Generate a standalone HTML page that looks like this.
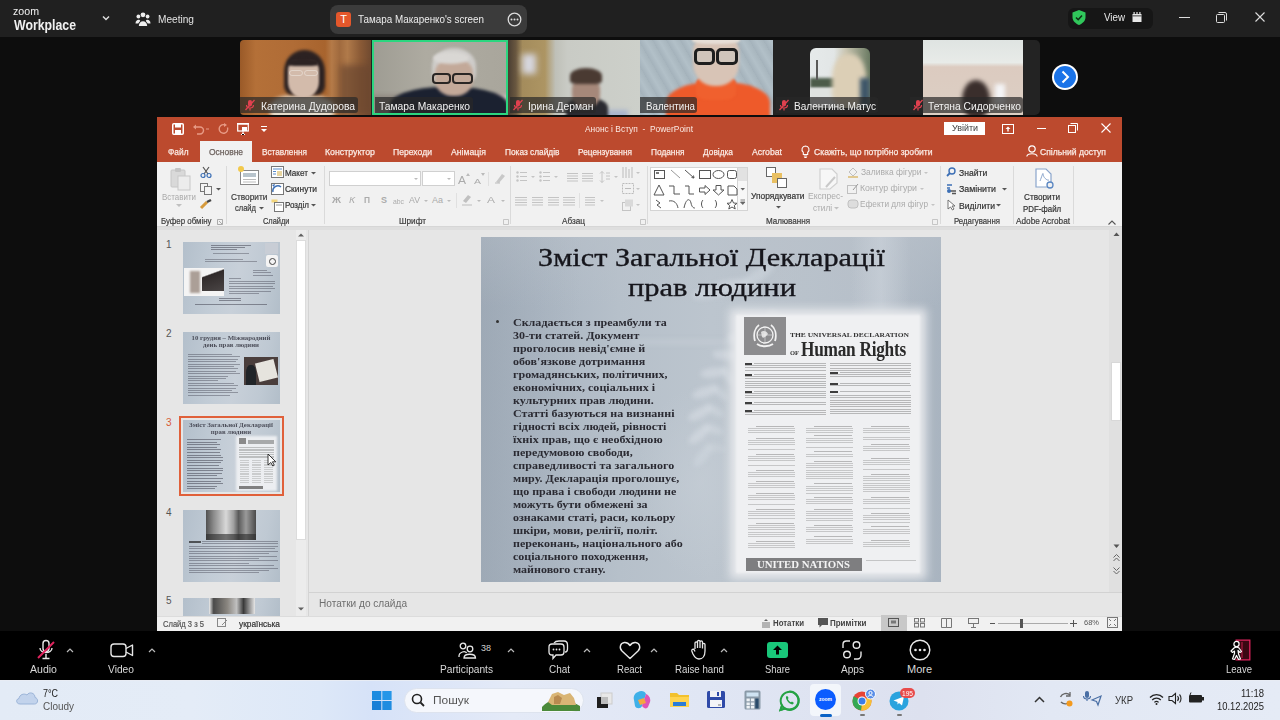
<!DOCTYPE html><html><head><meta charset="utf-8"><style>
*{margin:0;padding:0;box-sizing:border-box}
html,body{width:1280px;height:720px;overflow:hidden;background:#0d0d0d;font-family:"Liberation Sans",sans-serif}
.a{position:absolute}
.t{position:absolute;white-space:pre}
.bl{filter:blur(2px)}
svg{position:absolute;overflow:visible}
</style></head><body>
<div class="a" style="left:0;top:0;width:1280px;height:37px;background:#202020"></div>
<div class="t" style="left:13.00px;top:5.69px;font-size:11px;line-height:11px;color:#f0f0f0;font-weight:normal;font-family:'Liberation Sans',sans-serif;transform:scaleX(0.9663);transform-origin:0 0;">zoom</div>
<div class="t" style="left:14.00px;top:17.73px;font-size:14.5px;line-height:14.5px;color:#f0f0f0;font-weight:bold;font-family:'Liberation Sans',sans-serif;transform:scaleX(0.8484);transform-origin:0 0;">Workplace</div>
<svg style="left:101px;top:14px" width="10" height="8"><path d="M2 2.5 L5 5.5 L8 2.5" stroke="#ddd" stroke-width="1.5" fill="none"/></svg>
<svg style="left:135px;top:11px" width="16" height="16" viewBox="0 0 16 16" fill="#eee"><circle cx="8" cy="3.8" r="2.4"/><circle cx="3.4" cy="5.5" r="1.9"/><circle cx="12.6" cy="5.5" r="1.9"/><path d="M3.8 15 C3.8 8.5 12.2 8.5 12.2 15Z"/><path d="M0.5 12.5 C0.5 8 5 8 5.2 10 L3.2 12.5Z"/><path d="M15.5 12.5 C15.5 8 11 8 10.8 10 L12.8 12.5Z"/></svg>
<div class="t" style="left:158.00px;top:13.77px;font-size:11.5px;line-height:11.5px;color:#e2e2e2;font-weight:normal;font-family:'Liberation Sans',sans-serif;transform:scaleX(0.8797);transform-origin:0 0;">Meeting</div>
<div class="a" style="left:330px;top:5px;width:197px;height:29px;background:#3b3b3b;border-radius:8px"></div>
<div class="a" style="left:336px;top:12px;width:15px;height:15px;background:#e4572b;border-radius:3px"></div>
<div class="t" style="left:340.13px;top:13.69px;font-size:11px;line-height:11px;color:#fff;font-weight:normal;font-family:'Liberation Sans',sans-serif;">T</div>
<div class="t" style="left:358.00px;top:13.77px;font-size:11.5px;line-height:11.5px;color:#ececec;font-weight:normal;font-family:'Liberation Sans',sans-serif;transform:scaleX(0.8551);transform-origin:0 0;">Тамара Макаренко's screen</div>
<svg style="left:507px;top:12px" width="15" height="15"><circle cx="7.5" cy="7.5" r="6.3" stroke="#ddd" stroke-width="1.3" fill="none"/><circle cx="4.5" cy="7.5" r="1" fill="#ddd"/><circle cx="7.5" cy="7.5" r="1" fill="#ddd"/><circle cx="10.5" cy="7.5" r="1" fill="#ddd"/></svg>
<div class="a" style="left:1068px;top:8px;width:85px;height:21px;background:#161616;border-radius:6px"></div>
<svg style="left:1071px;top:9px" width="16" height="17" viewBox="0 0 16 17"><path d="M8 1 L14.5 3.5 L14.5 8 C14.5 12 11.5 14.5 8 16 C4.5 14.5 1.5 12 1.5 8 L1.5 3.5Z" fill="#30c75b"/><path d="M5 8.5 L7.2 10.7 L11 6.5" stroke="#0f2f16" stroke-width="1.6" fill="none"/></svg>
<div class="t" style="left:1104.00px;top:12.27px;font-size:11.5px;line-height:11.5px;color:#e8e8e8;font-weight:normal;font-family:'Liberation Sans',sans-serif;transform:scaleX(0.8496);transform-origin:0 0;">View</div>
<svg style="left:1132px;top:12px" width="10" height="10"><rect x="0.5" y="2" width="9" height="8" fill="#e8e8e8"/><rect x="1.5" y="0" width="1.2" height="2" fill="#e8e8e8"/><rect x="4.4" y="0" width="1.2" height="2" fill="#e8e8e8"/><rect x="7.3" y="0" width="1.2" height="2" fill="#e8e8e8"/><rect x="0.5" y="3.5" width="9" height="0.8" fill="#161616"/></svg>
<div class="a" style="left:1179px;top:17px;width:11px;height:1px;background:#ddd"></div>
<svg style="left:1215px;top:11px" width="13" height="13"><rect x="1.5" y="3.5" width="8" height="8" rx="1" stroke="#ddd" fill="none"/><path d="M3.5 1.5 H10 a1.5 1.5 0 0 1 1.5 1.5 V9.5" stroke="#ddd" fill="none"/></svg>
<svg style="left:1254px;top:11px" width="12" height="12"><path d="M1.5 1.5 L10.5 10.5 M10.5 1.5 L1.5 10.5" stroke="#ddd" stroke-width="1.1"/></svg>
<div class="a" style="left:240px;top:40px;width:800px;height:75px;background:#232323;border-radius:5px"></div>
<div class="a" style="left:240px;top:40px;width:131px;height:75px;overflow:hidden;border-radius:4px 0 0 4px;background:linear-gradient(90deg,#9a5a28 0%,#b47038 12%,#b06c36 40%,#a8642e 65%,#b47a48 70%,#a06a3e 76%,#b07a4a 82%,#8a5a36 92%,#704a30 100%)">
 <div class="a" style="left:100px;top:25px;width:31px;height:50px;background:#6a4630;filter:blur(3px);opacity:0.7"></div>
 <div class="a" style="left:30px;top:55px;width:64px;height:30px;border-radius:40%;background:#e6dccb;filter:blur(2px)"></div>
 <div class="a" style="left:44px;top:10px;width:41px;height:45px;border-radius:48% 48% 20% 20%;background:#2c2222;filter:blur(1.5px)"></div>
 <div class="a" style="left:48px;top:21px;width:31px;height:37px;border-radius:25% 25% 45% 45%;background:#d3bbab;filter:blur(1.2px)"></div>
 <div class="a" style="left:48px;top:18px;width:30px;height:8px;border-radius:50% 50% 20% 20%;background:#2c2222;filter:blur(1px)"></div>
 <div class="a" style="left:49px;top:30px;width:14px;height:6px;border:1px solid #ece4de;border-radius:3px;opacity:0.6"></div>
 <div class="a" style="left:64px;top:30px;width:14px;height:6px;border:1px solid #ece4de;border-radius:3px;opacity:0.6"></div>
</div>
<div class="a" style="left:240px;top:97px;width:118px;height:16px;background:rgba(40,40,40,0.7);border-radius:0 3px 3px 0"></div><svg style="left:244px;top:99px" width="12" height="12"><rect x="4" y="1" width="4" height="6.5" rx="2" fill="#e0414f"/><path d="M2.5 6 C2.5 10 9.5 10 9.5 6 M6 9.5 V11.5" stroke="#e0414f" stroke-width="1.2" fill="none"/><path d="M1.5 11 L10.5 1" stroke="#e0414f" stroke-width="1.3"/></svg><div class="t" style="left:261.00px;top:101.11px;font-size:10.5px;line-height:10.5px;color:#f2f2f2;font-weight:normal;font-family:'Liberation Sans',sans-serif;transform:scaleX(0.9820);transform-origin:0 0;">Катерина Дудорова</div>
<div class="a" style="left:372px;top:40px;width:135px;height:75px;overflow:hidden;background:linear-gradient(90deg,#9e9c93,#aeaba1 40%,#a9a69c 100%)">
 <div class="a" style="left:0;top:55px;width:135px;height:20px;background:#8f8880;filter:blur(2px)"></div>
 <div class="a" style="left:115px;top:55px;width:25px;height:22px;background:#d8c8c8;filter:blur(2px)"></div>
 <div class="a" style="left:18px;top:47px;width:118px;height:40px;border-radius:45% 45% 0 0;background:#1b2130;filter:blur(1.5px)"></div>
 <div class="a" style="left:60px;top:8px;width:44px;height:36px;border-radius:50% 50% 30% 30%;background:#cfcdca;filter:blur(1.5px)"></div>
 <div class="a" style="left:63px;top:20px;width:38px;height:36px;border-radius:35% 35% 45% 45%;background:#c3a999;filter:blur(1.5px)"></div>
 <div class="a" style="left:61px;top:12px;width:36px;height:12px;border-radius:50%;background:#d9d7d4;filter:blur(1.5px)"></div>
 <div class="a" style="left:60px;top:33px;width:19px;height:11px;border:2px solid #2a2624;border-radius:4px;filter:blur(0.4px)"></div>
 <div class="a" style="left:80px;top:33px;width:21px;height:11px;border:2px solid #2a2624;border-radius:4px;filter:blur(0.4px)"></div>
</div>
<div class="a" style="left:375px;top:97px;width:98px;height:16px;background:rgba(40,40,40,0.7);border-radius:0 3px 3px 0"></div><div class="t" style="left:379.00px;top:101.11px;font-size:10.5px;line-height:10.5px;color:#f2f2f2;font-weight:normal;font-family:'Liberation Sans',sans-serif;transform:scaleX(0.9801);transform-origin:0 0;">Тамара Макаренко</div>
<div class="a" style="left:372px;top:40px;width:136px;height:75px;border:2px solid #2bd67f"></div>
<div class="a" style="left:508px;top:40px;width:132px;height:75px;overflow:hidden;background:linear-gradient(90deg,#4a3e33 0%,#6a5840 6%,#a48c5c 11%,#ad9563 28%,#bfc0b8 36%,#c9cbc5 45%,#cdd0ca 100%)">
 <div class="a bl" style="left:14px;top:14px;width:14px;height:20px;background:#d6d6de;filter:blur(3px)"></div>
 <div class="a" style="left:62px;top:70px;width:58px;height:10px;background:#a8b4cc;filter:blur(2px)"></div>
 <div class="a" style="left:58px;top:58px;width:42px;height:25px;border-radius:40% 40% 0 0;background:#2a2a30;filter:blur(1.5px)"></div>
 <div class="a" style="left:64px;top:38px;width:28px;height:30px;border-radius:35% 35% 45% 45%;background:#a6887a;filter:blur(1.5px)"></div>
 <div class="a" style="left:62px;top:28px;width:32px;height:16px;border-radius:50% 50% 20% 20%;background:#4a3a32;filter:blur(1.5px)"></div>
</div>
<div class="a" style="left:510px;top:97px;width:86px;height:16px;background:rgba(40,40,40,0.7);border-radius:0 3px 3px 0"></div><svg style="left:512px;top:99px" width="12" height="12"><rect x="4" y="1" width="4" height="6.5" rx="2" fill="#e0414f"/><path d="M2.5 6 C2.5 10 9.5 10 9.5 6 M6 9.5 V11.5" stroke="#e0414f" stroke-width="1.2" fill="none"/><path d="M1.5 11 L10.5 1" stroke="#e0414f" stroke-width="1.3"/></svg><div class="t" style="left:527.50px;top:101.11px;font-size:10.5px;line-height:10.5px;color:#f2f2f2;font-weight:normal;font-family:'Liberation Sans',sans-serif;transform:scaleX(0.9801);transform-origin:0 0;">Ірина Дерман</div>
<div class="a" style="left:640px;top:40px;width:133px;height:75px;overflow:hidden;background:repeating-linear-gradient(60deg,#a4b2bb 0px,#b2c0c8 6px,#a8b6be 12px)">
 <div class="a" style="left:26px;top:42px;width:104px;height:45px;border-radius:45% 45% 0 0;background:#ee5a2a;filter:blur(1.5px)"></div>
 <div class="a" style="left:56px;top:36px;width:40px;height:24px;border-radius:30%;background:#f0602e;filter:blur(1px)"></div>
 <div class="a" style="left:53px;top:-4px;width:46px;height:50px;border-radius:30% 30% 45% 45%;background:#d8c4b6;filter:blur(1.5px)"></div>
 <div class="a" style="left:52px;top:-4px;width:48px;height:8px;border-radius:40%;background:#e6ded6;filter:blur(1px)"></div>
 <div class="a" style="left:54px;top:8px;width:21px;height:17px;border:3px solid #1e1e1e;border-radius:5px;background:rgba(190,200,200,0.3);filter:blur(0.4px)"></div>
 <div class="a" style="left:76px;top:8px;width:22px;height:17px;border:3px solid #1e1e1e;border-radius:5px;background:rgba(190,200,200,0.3);filter:blur(0.4px)"></div>
</div>
<div class="a" style="left:640px;top:97px;width:57px;height:16px;background:rgba(40,40,40,0.7);border-radius:0 3px 3px 0"></div><div class="t" style="left:645.50px;top:101.11px;font-size:10.5px;line-height:10.5px;color:#f2f2f2;font-weight:normal;font-family:'Liberation Sans',sans-serif;transform:scaleX(0.9259);transform-origin:0 0;">Валентина</div>
<div class="a" style="left:810px;top:48px;width:60px;height:60px;border-radius:6px;overflow:hidden;background:linear-gradient(90deg,#e6eaea 0%,#e2e6e6 40%,#c8c4b0 60%,#6a7a62 100%)">
  <div class="a" style="left:0;top:30px;width:30px;height:10px;background:#4c5c4a;filter:blur(1.5px)"></div>
  <div class="a" style="left:0;top:40px;width:30px;height:20px;background:#dfe2e0;filter:blur(1px)"></div>
  <div class="a" style="left:6px;top:12px;width:2px;height:20px;background:#5a5a58;filter:blur(0.4px)"></div>
  <div class="a" style="left:22px;top:6px;width:34px;height:54px;border-radius:45% 45% 30% 30%;background:#dccfb6;filter:blur(2px)"></div>
  <div class="a" style="left:50px;top:30px;width:10px;height:30px;background:#3e5668;filter:blur(2px)"></div>
</div>
<div class="a" style="left:776px;top:97px;width:102px;height:16px;background:rgba(40,40,40,0.7);border-radius:0 3px 3px 0"></div><svg style="left:778px;top:99px" width="12" height="12"><rect x="4" y="1" width="4" height="6.5" rx="2" fill="#e0414f"/><path d="M2.5 6 C2.5 10 9.5 10 9.5 6 M6 9.5 V11.5" stroke="#e0414f" stroke-width="1.2" fill="none"/><path d="M1.5 11 L10.5 1" stroke="#e0414f" stroke-width="1.3"/></svg><div class="t" style="left:794.00px;top:101.11px;font-size:10.5px;line-height:10.5px;color:#f2f2f2;font-weight:normal;font-family:'Liberation Sans',sans-serif;transform:scaleX(0.9577);transform-origin:0 0;">Валентина Матус</div>
<div class="a" style="left:923px;top:40px;width:100px;height:75px;overflow:hidden;background:linear-gradient(180deg,#dfe4e2 0%,#e8ebe8 30%,#dccbc0 36%,#dccfc4 100%)">
  <div class="a" style="left:72px;top:44px;width:10px;height:20px;background:#f4f4f6;filter:blur(2px)"></div>
  <div class="a bl" style="left:39px;top:40px;width:28px;height:40px;border-radius:50%;background:#3a2e2c"></div>
</div>
<div class="a" style="left:910px;top:97px;width:113px;height:16px;background:rgba(40,40,40,0.7);border-radius:0 3px 3px 0"></div><svg style="left:912px;top:99px" width="12" height="12"><rect x="4" y="1" width="4" height="6.5" rx="2" fill="#e0414f"/><path d="M2.5 6 C2.5 10 9.5 10 9.5 6 M6 9.5 V11.5" stroke="#e0414f" stroke-width="1.2" fill="none"/><path d="M1.5 11 L10.5 1" stroke="#e0414f" stroke-width="1.3"/></svg><div class="t" style="left:928.00px;top:101.11px;font-size:10.5px;line-height:10.5px;color:#f2f2f2;font-weight:normal;font-family:'Liberation Sans',sans-serif;transform:scaleX(0.9783);transform-origin:0 0;">Тетяна Сидорченко</div>
<svg style="left:1051px;top:63px" width="28" height="28"><circle cx="14" cy="14" r="13" fill="#fff"/><circle cx="14" cy="14" r="11" fill="#1a73e8"/><path d="M11.5 8.5 L17 14 L11.5 19.5" stroke="#fff" stroke-width="2" fill="none"/></svg>
<div class="a" style="left:157px;top:117px;width:965px;height:515px;background:#e7e7e7"></div>
<div class="a" style="left:157px;top:117px;width:965px;height:45px;background:#bc4a2e"></div>
<svg style="left:172px;top:123px" width="12" height="12"><rect x="0.75" y="0.75" width="10.5" height="10.5" rx="1" fill="none" stroke="#fff" stroke-width="1.5"/><rect x="3" y="1" width="6" height="3.5" fill="#fff"/><rect x="3" y="7" width="6" height="4" fill="#fff"/></svg>
<svg style="left:192px;top:123px" width="20" height="12"><path d="M3 4 H8 a3.5 3.5 0 0 1 0 7 H5" stroke="#e79a85" stroke-width="1.4" fill="none"/><path d="M1 4 L4 1.5 V6.5Z" fill="#e79a85"/><rect x="14" y="5.5" width="3" height="1" fill="#e79a85"/></svg>
<svg style="left:218px;top:123px" width="12" height="12"><path d="M9.5 4.5 A4.3 4.3 0 1 1 6 1.7" stroke="#e79a85" stroke-width="1.4" fill="none"/><path d="M6 0 L9 2 L6 4Z" fill="#e79a85"/></svg>
<svg style="left:236px;top:122px" width="14" height="14"><rect x="1" y="1" width="12" height="1.4" fill="#fff"/><rect x="1.7" y="2" width="10.6" height="7" fill="none" stroke="#fff" stroke-width="1.2"/><path d="M7 9 V12 M5 13 L7 11 L9 13" stroke="#fff" stroke-width="1"/><rect x="6" y="5" width="5" height="4" fill="#fff"/></svg>
<svg style="left:260px;top:125px" width="8" height="8"><rect x="1" y="1" width="6" height="1" fill="#fff"/><path d="M1 4 H7 L4 7Z" fill="#fff"/></svg>
<div class="t" style="left:585.00px;top:123.96px;font-size:9.5px;line-height:9.5px;color:#fbe9e3;font-weight:normal;font-family:'Liberation Sans',sans-serif;transform:scaleX(0.8852);transform-origin:0 0;">Анонс і Вступ  -  PowerPoint</div>
<div class="a" style="left:944px;top:122px;width:41px;height:13px;background:#fff"></div>
<div class="t" style="left:952.00px;top:123.46px;font-size:9.5px;line-height:9.5px;color:#3a3a3a;font-weight:normal;font-family:'Liberation Sans',sans-serif;transform:scaleX(0.9412);transform-origin:0 0;">Увійти</div>
<svg style="left:1002px;top:124px" width="12" height="10"><rect x="0.5" y="0.5" width="11" height="9" fill="none" stroke="#fff"/><path d="M6 2.5 L3.5 5 H8.5Z M5.3 5 V7.5 H6.7 V5" fill="#fff"/></svg>
<div class="a" style="left:1037px;top:128px;width:9px;height:1px;background:#fff"></div>
<svg style="left:1068px;top:123px" width="10" height="10"><rect x="0.5" y="2.5" width="7" height="7" fill="none" stroke="#fff"/><path d="M2.5 0.5 H9.5 V7.5" fill="none" stroke="#fff"/></svg>
<svg style="left:1101px;top:123px" width="10" height="10"><path d="M0.5 0.5 L9.5 9.5 M9.5 0.5 L0.5 9.5" stroke="#fff" stroke-width="1.1"/></svg>
<div class="a" style="left:200px;top:141px;width:52px;height:22px;background:#f1f1f1"></div>
<div class="t" style="left:167.50px;top:146.96px;font-size:9.5px;line-height:9.5px;color:#fbece6;font-weight:normal;font-family:'Liberation Sans',sans-serif;transform:scaleX(0.8776);transform-origin:0 0;-webkit-text-stroke:0.25px #fbece6;">Файл</div>
<div class="t" style="left:261.50px;top:146.96px;font-size:9.5px;line-height:9.5px;color:#fbece6;font-weight:normal;font-family:'Liberation Sans',sans-serif;transform:scaleX(0.8667);transform-origin:0 0;-webkit-text-stroke:0.25px #fbece6;">Вставлення</div>
<div class="t" style="left:325.00px;top:146.96px;font-size:9.5px;line-height:9.5px;color:#fbece6;font-weight:normal;font-family:'Liberation Sans',sans-serif;transform:scaleX(0.9230);transform-origin:0 0;-webkit-text-stroke:0.25px #fbece6;">Конструктор</div>
<div class="t" style="left:393.00px;top:146.96px;font-size:9.5px;line-height:9.5px;color:#fbece6;font-weight:normal;font-family:'Liberation Sans',sans-serif;transform:scaleX(0.9060);transform-origin:0 0;-webkit-text-stroke:0.25px #fbece6;">Переходи</div>
<div class="t" style="left:451.00px;top:146.96px;font-size:9.5px;line-height:9.5px;color:#fbece6;font-weight:normal;font-family:'Liberation Sans',sans-serif;transform:scaleX(0.9158);transform-origin:0 0;-webkit-text-stroke:0.25px #fbece6;">Анімація</div>
<div class="t" style="left:504.50px;top:146.96px;font-size:9.5px;line-height:9.5px;color:#fbece6;font-weight:normal;font-family:'Liberation Sans',sans-serif;transform:scaleX(0.8757);transform-origin:0 0;-webkit-text-stroke:0.25px #fbece6;">Показ слайдів</div>
<div class="t" style="left:578.00px;top:146.96px;font-size:9.5px;line-height:9.5px;color:#fbece6;font-weight:normal;font-family:'Liberation Sans',sans-serif;transform:scaleX(0.8718);transform-origin:0 0;-webkit-text-stroke:0.25px #fbece6;">Рецензування</div>
<div class="t" style="left:651.00px;top:146.96px;font-size:9.5px;line-height:9.5px;color:#fbece6;font-weight:normal;font-family:'Liberation Sans',sans-serif;transform:scaleX(0.8730);transform-origin:0 0;-webkit-text-stroke:0.25px #fbece6;">Подання</div>
<div class="t" style="left:703.00px;top:146.96px;font-size:9.5px;line-height:9.5px;color:#fbece6;font-weight:normal;font-family:'Liberation Sans',sans-serif;transform:scaleX(0.8775);transform-origin:0 0;-webkit-text-stroke:0.25px #fbece6;">Довідка</div>
<div class="t" style="left:752.00px;top:146.96px;font-size:9.5px;line-height:9.5px;color:#fbece6;font-weight:normal;font-family:'Liberation Sans',sans-serif;transform:scaleX(0.9160);transform-origin:0 0;-webkit-text-stroke:0.25px #fbece6;">Acrobat</div>
<div class="t" style="left:814.40px;top:146.96px;font-size:9.5px;line-height:9.5px;color:#fbece6;font-weight:normal;font-family:'Liberation Sans',sans-serif;transform:scaleX(0.9047);transform-origin:0 0;-webkit-text-stroke:0.25px #fbece6;">Скажіть, що потрібно зробити</div>
<div class="t" style="left:1040.00px;top:146.96px;font-size:9.5px;line-height:9.5px;color:#fbece6;font-weight:normal;font-family:'Liberation Sans',sans-serif;transform:scaleX(0.9035);transform-origin:0 0;-webkit-text-stroke:0.25px #fbece6;">Спільний доступ</div>
<div class="t" style="left:209.00px;top:146.96px;font-size:9.5px;line-height:9.5px;color:#6a5f5b;font-weight:normal;font-family:'Liberation Sans',sans-serif;transform:scaleX(0.8889);transform-origin:0 0;-webkit-text-stroke:0.25px #6a5f5b;">Основне</div>
<svg style="left:801px;top:145px" width="9" height="13"><path d="M4.5 1 a3.6 3.6 0 0 1 2.2 6.4 V9.5 H2.3 V7.4 A3.6 3.6 0 0 1 4.5 1Z" fill="none" stroke="#fff" stroke-width="1.1"/><path d="M2.8 11 H6.2 M3.3 12.5 H5.7" stroke="#fff" stroke-width="1"/></svg>
<svg style="left:1026px;top:145px" width="12" height="12"><circle cx="6" cy="4" r="3.2" fill="none" stroke="#fff" stroke-width="1.2"/><path d="M0.8 11.5 C1.5 7.8 10.5 7.8 11.2 11.5" fill="none" stroke="#fff" stroke-width="1.2"/></svg>
<div class="a" style="left:157px;top:162px;width:965px;height:65px;background:#f1f1f1;border-bottom:1px solid #d6d6d6"></div>
<div class="a" style="left:157px;top:227px;width:965px;height:3px;background:#dedede"></div>
<div class="a" style="left:226px;top:166px;width:1px;height:58px;background:#dadada"></div>
<div class="a" style="left:324px;top:166px;width:1px;height:58px;background:#dadada"></div>
<div class="a" style="left:510px;top:166px;width:1px;height:58px;background:#dadada"></div>
<div class="a" style="left:647px;top:166px;width:1px;height:58px;background:#dadada"></div>
<div class="a" style="left:940px;top:166px;width:1px;height:58px;background:#dadada"></div>
<div class="a" style="left:1013px;top:166px;width:1px;height:58px;background:#dadada"></div>
<div class="a" style="left:1073px;top:166px;width:1px;height:58px;background:#dadada"></div>
<svg style="left:169px;top:167px" width="24" height="24"><rect x="2" y="3" width="14" height="17" rx="1" fill="#d9d9d9" stroke="#c6c6c6"/><rect x="6" y="1" width="6" height="4" rx="1" fill="#c4c4c4"/><rect x="9" y="9" width="12" height="14" fill="#ececec" stroke="#c8c8c8"/></svg>
<div class="t" style="left:162.00px;top:193.38px;font-size:9px;line-height:9px;color:#ababab;font-weight:normal;font-family:'Liberation Sans',sans-serif;transform:scaleX(0.8831);transform-origin:0 0;">Вставити</div>
<svg style="left:176px;top:204px" width="6" height="4"><path d="M0 0 H6 L3 3Z" fill="#c0c0c0"/></svg>
<svg style="left:200px;top:166px" width="12" height="12"><path d="M3 1 L8 8 M9 1 L4 8" stroke="#555" stroke-width="1.2"/><circle cx="3" cy="9.5" r="2" fill="none" stroke="#3c6fb5" stroke-width="1.2"/><circle cx="9" cy="9.5" r="2" fill="none" stroke="#3c6fb5" stroke-width="1.2"/></svg>
<svg style="left:200px;top:183px" width="22" height="12"><rect x="0.5" y="0.5" width="7" height="8" fill="#f4f4f4" stroke="#777"/><rect x="4.5" y="3.5" width="7" height="8" fill="#f4f4f4" stroke="#777"/><path d="M16 5 H21 L18.5 7.5Z" fill="#555"/></svg>
<svg style="left:200px;top:199px" width="13" height="11"><path d="M1 9 L7 3" stroke="#d69a3c" stroke-width="3"/><path d="M7 3 L11 1" stroke="#444" stroke-width="2.5"/></svg>
<div class="t" style="left:160.50px;top:217.38px;font-size:9px;line-height:9px;color:#444;font-weight:normal;font-family:'Liberation Sans',sans-serif;transform:scaleX(0.8759);transform-origin:0 0;-webkit-text-stroke:0.2px #333;">Буфер обміну</div>
<svg style="left:217px;top:219px" width="6" height="6"><path d="M0.5 0.5 H5.5 V5.5 H0.5Z" fill="none" stroke="#999" stroke-width="0.8"/><path d="M2 2 L5 5" stroke="#999" stroke-width="0.8"/></svg>
<svg style="left:238px;top:166px" width="22" height="22"><rect x="2.5" y="4.5" width="18" height="14" fill="#fff" stroke="#888"/><rect x="5" y="7" width="13" height="4" fill="#b8c4cc"/><path d="M5 13.5 H18 M5 16 H18" stroke="#bbb"/><circle cx="3" cy="3" r="3" fill="#f2c94c"/></svg>
<div class="t" style="left:231.00px;top:193.38px;font-size:9px;line-height:9px;color:#444;font-weight:normal;font-family:'Liberation Sans',sans-serif;transform:scaleX(0.9215);transform-origin:0 0;-webkit-text-stroke:0.2px #333;">Створити</div>
<div class="t" style="left:235.00px;top:204.38px;font-size:9px;line-height:9px;color:#444;font-weight:normal;font-family:'Liberation Sans',sans-serif;transform:scaleX(0.8384);transform-origin:0 0;-webkit-text-stroke:0.2px #333;">слайд</div>
<svg style="left:259px;top:207px" width="5" height="3"><path d="M0 0 H5 L2.5 2.5Z" fill="#555"/></svg>
<svg style="left:271px;top:166px" width="13" height="12"><rect x="0.5" y="0.5" width="12" height="11" fill="#fff" stroke="#777"/><path d="M2 3 H11 M2 5.5 H5 M2 8 H5" stroke="#5b8bc8" stroke-width="1.2"/><rect x="6" y="5" width="5" height="5" fill="#e8d5a0"/></svg>
<div class="t" style="left:285.00px;top:168.88px;font-size:9px;line-height:9px;color:#333;font-weight:normal;font-family:'Liberation Sans',sans-serif;transform:scaleX(0.9025);transform-origin:0 0;-webkit-text-stroke:0.2px #333;">Макет</div>
<svg style="left:311px;top:172px" width="5" height="3"><path d="M0 0 H5 L2.5 2.5Z" fill="#555"/></svg>
<svg style="left:271px;top:183px" width="13" height="12"><rect x="0.5" y="0.5" width="12" height="11" fill="#fff" stroke="#777"/><path d="M2 9 A5 5 0 0 1 10 4" stroke="#3c6fb5" stroke-width="1.5" fill="none"/><path d="M1 2 L4 1 L3 4Z" fill="#3c6fb5"/></svg>
<div class="t" style="left:285.00px;top:184.98px;font-size:9px;line-height:9px;color:#333;font-weight:normal;font-family:'Liberation Sans',sans-serif;transform:scaleX(0.9386);transform-origin:0 0;-webkit-text-stroke:0.2px #333;">Скинути</div>
<svg style="left:271px;top:199px" width="13" height="13"><rect x="0.5" y="0.5" width="6" height="3" fill="#f2c94c" opacity="0.7"/><rect x="3.5" y="3.5" width="9" height="9" fill="#fff" stroke="#777"/><path d="M5 6 H11" stroke="#999"/></svg>
<div class="t" style="left:285.00px;top:201.18px;font-size:9px;line-height:9px;color:#333;font-weight:normal;font-family:'Liberation Sans',sans-serif;transform:scaleX(0.8904);transform-origin:0 0;-webkit-text-stroke:0.2px #333;">Розділ</div>
<svg style="left:311px;top:204px" width="5" height="3"><path d="M0 0 H5 L2.5 2.5Z" fill="#555"/></svg>
<div class="t" style="left:262.50px;top:217.38px;font-size:9px;line-height:9px;color:#444;font-weight:normal;font-family:'Liberation Sans',sans-serif;transform:scaleX(0.8265);transform-origin:0 0;-webkit-text-stroke:0.2px #333;">Слайди</div>
<div class="a" style="left:329px;top:171px;width:92px;height:15px;background:#fff;border:1px solid #d0d0d0"></div>
<div class="a" style="left:422px;top:171px;width:33px;height:15px;background:#fff;border:1px solid #d0d0d0"></div>
<svg style="left:414px;top:178px" width="5" height="3"><path d="M0 0 H4 L2 2Z" fill="#bbb"/></svg>
<svg style="left:447px;top:178px" width="5" height="3"><path d="M0 0 H4 L2 2Z" fill="#bbb"/></svg>
<div class="t" style="left:458.00px;top:176.03px;font-size:10px;line-height:10px;color:#ababab;font-weight:normal;font-family:'Liberation Sans',sans-serif;transform:scaleX(1.1991);transform-origin:0 0;">A</div>
<div class="t" style="left:474.00px;top:177.73px;font-size:8px;line-height:8px;color:#ababab;font-weight:normal;font-family:'Liberation Sans',sans-serif;transform:scaleX(1.3099);transform-origin:0 0;">A</div>
<svg style="left:466px;top:173px" width="4" height="3"><path d="M0 3 L2 0 L4 3Z" fill="#bbb"/></svg>
<svg style="left:481px;top:173px" width="4" height="3"><path d="M0 0 H4 L2 3Z" fill="#bbb"/></svg>
<div class="a" style="left:488px;top:172px;width:1px;height:14px;background:#e0e0e0"></div>
<svg style="left:494px;top:172px" width="12" height="12"><path d="M2 10 L8 2 L11 4 L5 11Z" fill="#c8c8c8"/><path d="M1 11 H6" stroke="#bbb"/></svg>
<div class="t" style="left:332.00px;top:196.38px;font-size:9px;line-height:9px;color:#ababab;font-weight:bold;font-family:'Liberation Sans',sans-serif;transform:scaleX(1.1056);transform-origin:0 0;">Ж</div>
<div class="t" style="left:349.00px;top:196.38px;font-size:9px;line-height:9px;color:#ababab;font-weight:normal;font-family:'Liberation Sans',sans-serif;transform:scaleX(1.1429);transform-origin:0 0;font-style:italic;">К</div>
<div class="t" style="left:364.00px;top:196.38px;font-size:9px;line-height:9px;color:#ababab;font-weight:bold;font-family:'Liberation Sans',sans-serif;transform:scaleX(0.9275);transform-origin:0 0;">П</div>
<div class="t" style="left:381.00px;top:196.38px;font-size:9px;line-height:9px;color:#ababab;font-weight:bold;font-family:'Liberation Sans',sans-serif;">S</div>
<div class="t" style="left:393.00px;top:198.07px;font-size:7px;line-height:7px;color:#ababab;font-weight:normal;font-family:'Liberation Sans',sans-serif;transform:scaleX(0.9737);transform-origin:0 0;">abc</div>
<div class="t" style="left:409.00px;top:196.38px;font-size:9px;line-height:9px;color:#ababab;font-weight:normal;font-family:'Liberation Sans',sans-serif;transform:scaleX(0.9697);transform-origin:0 0;">AV</div>
<div class="t" style="left:432.00px;top:196.38px;font-size:9px;line-height:9px;color:#ababab;font-weight:normal;font-family:'Liberation Sans',sans-serif;">Aa</div>
<div class="t" style="left:487.00px;top:196.38px;font-size:9px;line-height:9px;color:#ababab;font-weight:normal;font-family:'Liberation Sans',sans-serif;transform:scaleX(1.3299);transform-origin:0 0;">A</div>
<svg style="left:424px;top:200px" width="5" height="3"><path d="M0 0 H4 L2 2Z" fill="#bbb"/></svg>
<svg style="left:447px;top:200px" width="5" height="3"><path d="M0 0 H4 L2 2Z" fill="#bbb"/></svg>
<svg style="left:477px;top:200px" width="5" height="3"><path d="M0 0 H4 L2 2Z" fill="#bbb"/></svg>
<svg style="left:501px;top:200px" width="5" height="3"><path d="M0 0 H4 L2 2Z" fill="#bbb"/></svg>
<div class="a" style="left:456px;top:193px;width:1px;height:15px;background:#e0e0e0"></div>
<svg style="left:461px;top:193px" width="12" height="13"><path d="M2 8 L7 2 L10 4 L5 10Z" fill="#c0c0c0"/><path d="M1 12 H11" stroke="#d7d7d7" stroke-width="2"/></svg>
<div class="t" style="left:399.00px;top:217.38px;font-size:9px;line-height:9px;color:#444;font-weight:normal;font-family:'Liberation Sans',sans-serif;transform:scaleX(0.9114);transform-origin:0 0;-webkit-text-stroke:0.2px #333;">Шрифт</div>
<svg style="left:503px;top:219px" width="6" height="6"><path d="M0.5 0.5 H5.5 V5.5 H0.5Z" fill="none" stroke="#bbb" stroke-width="0.8"/></svg>
<svg style="left:516px;top:171px" width="11" height="14"><circle cx="1.5" cy="1.5" r="1.2" fill="#c4c4c4"/><rect x="4" y="1" width="7" height="1" fill="#c4c4c4"/><circle cx="1.5" cy="5.5" r="1.2" fill="#c4c4c4"/><rect x="4" y="5" width="7" height="1" fill="#c4c4c4"/><circle cx="1.5" cy="9.5" r="1.2" fill="#c4c4c4"/><rect x="4" y="9" width="7" height="1" fill="#c4c4c4"/></svg>
<svg style="left:539px;top:171px" width="11" height="14"><circle cx="1.5" cy="1.5" r="1.2" fill="#c4c4c4"/><rect x="4" y="1" width="7" height="1" fill="#c4c4c4"/><circle cx="1.5" cy="5.5" r="1.2" fill="#c4c4c4"/><rect x="4" y="5" width="7" height="1" fill="#c4c4c4"/><circle cx="1.5" cy="9.5" r="1.2" fill="#c4c4c4"/><rect x="4" y="9" width="7" height="1" fill="#c4c4c4"/></svg>
<svg style="left:567px;top:172px" width="11" height="12.0"><rect x="0" y="1.0" width="11" height="1" fill="#c4c4c4"/><rect x="0" y="3.5" width="11" height="1" fill="#c4c4c4"/><rect x="0" y="6.0" width="11" height="1" fill="#c4c4c4"/><rect x="0" y="8.5" width="11" height="1" fill="#c4c4c4"/></svg>
<svg style="left:582px;top:172px" width="11" height="12.0"><rect x="0" y="1.0" width="11" height="1" fill="#c4c4c4"/><rect x="0" y="3.5" width="11" height="1" fill="#c4c4c4"/><rect x="0" y="6.0" width="11" height="1" fill="#c4c4c4"/><rect x="0" y="8.5" width="11" height="1" fill="#c4c4c4"/></svg>
<svg style="left:600px;top:171px" width="10" height="12"><path d="M2 0.5 V11.5 M0 2.5 L2 0.5 L4 2.5 M0 9.5 L2 11.5 L4 9.5" stroke="#c4c4c4" fill="none"/><path d="M6 2 H10 M6 5 H10 M6 8 H10" stroke="#c4c4c4"/></svg>
<svg style="left:531px;top:176px" width="5" height="3"><path d="M0 0 H4 L2 2Z" fill="#c4c4c4"/></svg>
<svg style="left:554px;top:176px" width="5" height="3"><path d="M0 0 H4 L2 2Z" fill="#c4c4c4"/></svg>
<svg style="left:614px;top:176px" width="5" height="3"><path d="M0 0 H4 L2 2Z" fill="#c4c4c4"/></svg>
<svg style="left:622px;top:166px" width="12" height="13"><path d="M1 1 V12 M4 1 V12 M7 3 V12 M10 1 V12" stroke="#bbb"/></svg>
<svg style="left:622px;top:183px" width="12" height="11"><rect x="0.5" y="0.5" width="11" height="10" fill="none" stroke="#bbb" stroke-dasharray="2 1"/><path d="M3 5.5 H9" stroke="#bbb"/></svg>
<svg style="left:622px;top:199px" width="12" height="12"><rect x="0.5" y="3.5" width="8" height="8" fill="none" stroke="#c4c4c4"/><rect x="3" y="0.5" width="8" height="7" fill="#d9d9d9"/></svg>
<svg style="left:636px;top:172px" width="5" height="3"><path d="M0 0 H4 L2 2Z" fill="#c4c4c4"/></svg>
<svg style="left:636px;top:188px" width="5" height="3"><path d="M0 0 H4 L2 2Z" fill="#c4c4c4"/></svg>
<svg style="left:636px;top:204px" width="5" height="3"><path d="M0 0 H4 L2 2Z" fill="#c4c4c4"/></svg>
<svg style="left:515px;top:196px" width="12" height="12.0"><rect x="0" y="1.0" width="12" height="1" fill="#c4c4c4"/><rect x="0" y="3.5" width="12" height="1" fill="#c4c4c4"/><rect x="0" y="6.0" width="12" height="1" fill="#c4c4c4"/><rect x="0" y="8.5" width="12" height="1" fill="#c4c4c4"/></svg>
<svg style="left:532px;top:196px" width="11" height="12.0"><rect x="0" y="1.0" width="11" height="1" fill="#c4c4c4"/><rect x="0" y="3.5" width="11" height="1" fill="#c4c4c4"/><rect x="0" y="6.0" width="11" height="1" fill="#c4c4c4"/><rect x="0" y="8.5" width="11" height="1" fill="#c4c4c4"/></svg>
<svg style="left:548px;top:196px" width="11" height="12.0"><rect x="0" y="1.0" width="11" height="1" fill="#c4c4c4"/><rect x="0" y="3.5" width="11" height="1" fill="#c4c4c4"/><rect x="0" y="6.0" width="11" height="1" fill="#c4c4c4"/><rect x="0" y="8.5" width="11" height="1" fill="#c4c4c4"/></svg>
<svg style="left:563px;top:196px" width="12" height="12.0"><rect x="0" y="1.0" width="12" height="1" fill="#c4c4c4"/><rect x="0" y="3.5" width="12" height="1" fill="#c4c4c4"/><rect x="0" y="6.0" width="12" height="1" fill="#c4c4c4"/><rect x="0" y="8.5" width="12" height="1" fill="#c4c4c4"/></svg>
<div class="a" style="left:579px;top:193px;width:1px;height:15px;background:#e0e0e0"></div>
<svg style="left:585px;top:196px" width="10" height="12.0"><rect x="0" y="1.0" width="10" height="1" fill="#c4c4c4"/><rect x="0" y="3.5" width="10" height="1" fill="#c4c4c4"/><rect x="0" y="6.0" width="10" height="1" fill="#c4c4c4"/><rect x="0" y="8.5" width="10" height="1" fill="#c4c4c4"/></svg>
<svg style="left:600px;top:200px" width="5" height="3"><path d="M0 0 H4 L2 2Z" fill="#c4c4c4"/></svg>
<div class="t" style="left:562.00px;top:217.38px;font-size:9px;line-height:9px;color:#444;font-weight:normal;font-family:'Liberation Sans',sans-serif;transform:scaleX(0.9109);transform-origin:0 0;-webkit-text-stroke:0.2px #333;">Абзац</div>
<svg style="left:640px;top:219px" width="6" height="6"><path d="M0.5 0.5 H5.5 V5.5 H0.5Z" fill="none" stroke="#bbb" stroke-width="0.8"/></svg>
<div class="a" style="left:650px;top:167px;width:88px;height:44px;background:#fff;border:1px solid #d4d4d4"></div>
<div class="a" style="left:737px;top:167px;width:11px;height:44px;background:#f7f7f7;border:1px solid #d4d4d4"></div>
<div class="a" style="left:738px;top:168px;width:9px;height:13px;background:#e2e2e2"></div>
<svg style="left:652px;top:168px" width="86" height="42" fill="none" stroke="#555" stroke-width="1">
<rect x="2.5" y="2.5" width="10" height="8"/><rect x="4" y="4" width="3" height="2" fill="#777" stroke="none"/>
<path d="M19 2 L28 10" stroke="#999"/><path d="M33 2 L42 10"/><path d="M42 10 L39.5 9.5 M42 10 L41.5 7.5"/>
<rect x="47.5" y="2.5" width="11" height="8"/><ellipse cx="66.5" cy="6.5" rx="5.5" ry="4"/><rect x="75.5" y="2.5" width="9" height="8" rx="2"/>
<path d="M2 27 L7 17 L12 27Z"/><path d="M17 18 H22 V26 H28"/><path d="M33 18 H37 V26 H42"/><path d="M47.5 20 H53 V17.5 L58 22 L53 26.5 V24 H47.5Z"/><path d="M64 17.5 H69 V22 H72 L66.5 27 L61 22 H64Z"/><path d="M76 18 H82 L85 21 V27 H76Z"/>
<path d="M4 32 L8 35 L5 37 L9 40"/><path d="M17 33 C22 32 25 35 26 40"/><path d="M32 40 C34 30 38 30 39 35 C40 40 42 40 43 40"/><path d="M51 32 C49 34 49 38 51 40"/><path d="M63 32 C65 34 65 38 63 40"/><path d="M80 31.5 L81.5 35 L85 35.3 L82.3 37.5 L83.2 41 L80 39 L76.8 41 L77.7 37.5 L75 35.3 L78.5 35Z"/>
</svg>
<svg style="left:740px;top:187px" width="6" height="20"><path d="M0.5 1 H5 L2.75 3.5Z" fill="#666"/><path d="M0.5 13 H5 M0.5 15 H5 L2.75 17.5Z" fill="#666" stroke="#666" stroke-width="0.8"/></svg>
<svg style="left:766px;top:167px" width="22" height="22"><rect x="0.5" y="0.5" width="9" height="9" fill="#fff" stroke="#666"/><rect x="6" y="6" width="10" height="10" fill="#e9c062"/><rect x="11.5" y="11.5" width="9" height="9" fill="#fff" stroke="#666"/></svg>
<div class="t" style="left:751.00px;top:192.38px;font-size:9px;line-height:9px;color:#333;font-weight:normal;font-family:'Liberation Sans',sans-serif;transform:scaleX(0.9320);transform-origin:0 0;-webkit-text-stroke:0.2px #333;">Упорядкувати</div>
<svg style="left:776px;top:206px" width="5" height="3"><path d="M0 0 H5 L2.5 2.5Z" fill="#555"/></svg>
<svg style="left:816px;top:167px" width="24" height="24"><path d="M4 2 H16 L21 7 V16 L14 22 H4Z" fill="#f7f7f7" stroke="#d0d0d0" stroke-width="1.2"/><path d="M10 20 L19 10" stroke="#c9c9c9" stroke-width="2"/></svg>
<div class="t" style="left:808.00px;top:192.38px;font-size:9px;line-height:9px;color:#ababab;font-weight:normal;font-family:'Liberation Sans',sans-serif;transform:scaleX(0.9475);transform-origin:0 0;">Експрес-</div>
<div class="t" style="left:813.00px;top:204.38px;font-size:9px;line-height:9px;color:#ababab;font-weight:normal;font-family:'Liberation Sans',sans-serif;transform:scaleX(0.9088);transform-origin:0 0;">стилі</div>
<svg style="left:834px;top:207px" width="5" height="3"><path d="M0 0 H5 L2.5 2.5Z" fill="#c0c0c0"/></svg>
<svg style="left:847px;top:167px" width="12" height="11"><path d="M2 5 L6 1 L10 5 L6 9Z" fill="none" stroke="#c0c0c0"/><path d="M1 10 H11" stroke="#e0c890" stroke-width="2"/></svg>
<div class="t" style="left:860.50px;top:168.38px;font-size:9px;line-height:9px;color:#ababab;font-weight:normal;font-family:'Liberation Sans',sans-serif;transform:scaleX(0.9414);transform-origin:0 0;">Заливка фігури</div>
<svg style="left:847px;top:183px" width="12" height="11"><rect x="0.5" y="2.5" width="9" height="8" fill="none" stroke="#c0c0c0"/><path d="M6 7 L11 1" stroke="#999"/></svg>
<div class="t" style="left:860.00px;top:184.38px;font-size:9px;line-height:9px;color:#ababab;font-weight:normal;font-family:'Liberation Sans',sans-serif;transform:scaleX(0.9749);transform-origin:0 0;">Контур фігури</div>
<svg style="left:847px;top:199px" width="12" height="11"><rect x="1" y="1" width="10" height="8" rx="3" fill="#ddd" stroke="#c0c0c0"/></svg>
<div class="t" style="left:860.00px;top:200.38px;font-size:9px;line-height:9px;color:#ababab;font-weight:normal;font-family:'Liberation Sans',sans-serif;transform:scaleX(0.9179);transform-origin:0 0;">Ефекти для фігур</div>
<svg style="left:924px;top:172px" width="5" height="3"><path d="M0 0 H4 L2 2Z" fill="#c4c4c4"/></svg>
<svg style="left:920px;top:188px" width="5" height="3"><path d="M0 0 H4 L2 2Z" fill="#c4c4c4"/></svg>
<svg style="left:931px;top:204px" width="5" height="3"><path d="M0 0 H4 L2 2Z" fill="#c4c4c4"/></svg>
<div class="t" style="left:766.00px;top:217.38px;font-size:9px;line-height:9px;color:#444;font-weight:normal;font-family:'Liberation Sans',sans-serif;transform:scaleX(0.8960);transform-origin:0 0;-webkit-text-stroke:0.2px #333;">Малювання</div>
<svg style="left:932px;top:219px" width="6" height="6"><path d="M0.5 0.5 H5.5 V5.5 H0.5Z" fill="none" stroke="#bbb" stroke-width="0.8"/></svg>
<svg style="left:946px;top:167px" width="10" height="10"><circle cx="6" cy="4" r="3" fill="none" stroke="#3c6fb5" stroke-width="1.4"/><path d="M4 6 L1 9" stroke="#3c6fb5" stroke-width="1.8"/></svg>
<div class="t" style="left:959.40px;top:169.38px;font-size:9px;line-height:9px;color:#333;font-weight:normal;font-family:'Liberation Sans',sans-serif;transform:scaleX(0.9529);transform-origin:0 0;-webkit-text-stroke:0.2px #333;">Знайти</div>
<svg style="left:946px;top:183px" width="11" height="11"><path d="M1 2 H6 M1 5 H4" stroke="#3c6fb5" stroke-width="1.5"/><path d="M4 8 H10 M6 10.5 H10" stroke="#555" stroke-width="1.3"/><circle cx="3" cy="8" r="2" fill="#3c6fb5"/></svg>
<div class="t" style="left:959.00px;top:185.38px;font-size:9px;line-height:9px;color:#333;font-weight:normal;font-family:'Liberation Sans',sans-serif;transform:scaleX(0.9793);transform-origin:0 0;-webkit-text-stroke:0.2px #333;">Замінити</div>
<svg style="left:1002px;top:188px" width="5" height="3"><path d="M0 0 H5 L2.5 2.5Z" fill="#555"/></svg>
<svg style="left:947px;top:199px" width="9" height="12"><path d="M1 1 V10 L3.5 8 L5.5 11 L7 10 L5 7 H8Z" fill="#fff" stroke="#666" stroke-width="0.9"/></svg>
<div class="t" style="left:959.00px;top:201.88px;font-size:9px;line-height:9px;color:#333;font-weight:normal;font-family:'Liberation Sans',sans-serif;transform:scaleX(0.9544);transform-origin:0 0;-webkit-text-stroke:0.2px #333;">Виділити</div>
<svg style="left:996px;top:204px" width="5" height="3"><path d="M0 0 H5 L2.5 2.5Z" fill="#555"/></svg>
<div class="t" style="left:954.00px;top:217.38px;font-size:9px;line-height:9px;color:#444;font-weight:normal;font-family:'Liberation Sans',sans-serif;transform:scaleX(0.8684);transform-origin:0 0;-webkit-text-stroke:0.2px #333;">Редагування</div>
<svg style="left:1034px;top:168px" width="22" height="22"><path d="M2 1 H12 L17 6 V19 H2Z" fill="#fff" stroke="#8aa5cc" stroke-width="1.2"/><path d="M6 13 C8 8 9 4 9 6 C9 9 13 13 15 12" stroke="#8aa5cc" fill="none"/><circle cx="16" cy="17" r="3" fill="#f1f1f1" stroke="#5a86c2" stroke-width="1.3"/></svg>
<div class="t" style="left:1024.00px;top:193.38px;font-size:9px;line-height:9px;color:#333;font-weight:normal;font-family:'Liberation Sans',sans-serif;transform:scaleX(0.9114);transform-origin:0 0;-webkit-text-stroke:0.2px #333;">Створити</div>
<div class="t" style="left:1022.80px;top:204.68px;font-size:9px;line-height:9px;color:#333;font-weight:normal;font-family:'Liberation Sans',sans-serif;transform:scaleX(0.8744);transform-origin:0 0;-webkit-text-stroke:0.2px #333;">PDF-файл</div>
<div class="t" style="left:1015.70px;top:217.18px;font-size:9px;line-height:9px;color:#444;font-weight:normal;font-family:'Liberation Sans',sans-serif;transform:scaleX(0.9145);transform-origin:0 0;-webkit-text-stroke:0.2px #333;">Adobe Acrobat</div>
<svg style="left:1108px;top:220px" width="8" height="5"><path d="M0.5 4.5 L4 1 L7.5 4.5" stroke="#555" stroke-width="1.1" fill="none"/></svg>
<div class="a" style="left:157px;top:230px;width:150px;height:386px;background:#e6e6e6"></div>
<div class="a" style="left:308px;top:230px;width:1px;height:386px;background:#d4d4d4"></div>
<div class="a" style="left:296px;top:230px;width:10px;height:386px;background:#ececec"></div>
<div class="a" style="left:296px;top:240px;width:10px;height:300px;background:#fff;border:1px solid #dcdcdc"></div>
<svg style="left:298px;top:233px" width="6" height="4"><path d="M0 3.5 L3 0.5 L6 3.5Z" fill="#606060"/></svg>
<svg style="left:298px;top:607px" width="6" height="4"><path d="M0 0.5 L3 3.5 L6 0.5Z" fill="#606060"/></svg>
<div class="t" style="left:166.00px;top:239.53px;font-size:10px;line-height:10px;color:#555;font-weight:normal;font-family:'Liberation Sans',sans-serif;">1</div>
<div class="t" style="left:166.00px;top:328.54px;font-size:10px;line-height:10px;color:#555;font-weight:normal;font-family:'Liberation Sans',sans-serif;">2</div>
<div class="t" style="left:166.00px;top:507.54px;font-size:10px;line-height:10px;color:#555;font-weight:normal;font-family:'Liberation Sans',sans-serif;">4</div>
<div class="t" style="left:166.00px;top:595.53px;font-size:10px;line-height:10px;color:#555;font-weight:normal;font-family:'Liberation Sans',sans-serif;">5</div>
<div class="t" style="left:166.00px;top:417.54px;font-size:10px;line-height:10px;color:#d65a36;font-weight:normal;font-family:'Liberation Sans',sans-serif;">3</div>
<div class="a" style="left:183px;top:242px;width:97px;height:72px;background:linear-gradient(100deg,#b3bfcb 0%,#c2ccd6 35%,#c8d0d9 55%,#bfc9d3 80%,#b2bec9 100%);overflow:hidden"><div class="a" style="left:0;top:0;width:97px;height:72px;filter:blur(0.35px)"><div class="a" style="left:28px;top:3.0px;width:40px;height:1px;background:#3a3a48;opacity:0.5"></div><div class="a" style="left:28px;top:5.0px;width:34px;height:1px;background:#3a3a48;opacity:0.5"></div><div class="a" style="left:28px;top:7.0px;width:26px;height:1px;background:#3a3a48;opacity:0.5"></div><div class="a" style="left:30px;top:11.0px;width:36px;height:1px;background:#3a3a48;opacity:0.38"></div><div class="a" style="left:22px;top:17.0px;width:38px;height:1px;background:#3a3a48;opacity:0.38"></div><div class="a" style="left:22px;top:19.2px;width:52px;height:1px;background:#3a3a48;opacity:0.38"></div><div class="a" style="left:82px;top:1px;width:13px;height:11px;background:#c8cdd5;filter:blur(0.5px)"></div><div class="a" style="left:83px;top:13px;width:12px;height:12px;background:#f4f4f4;border-radius:2px"><div class="a" style="left:2.5px;top:2.5px;width:7px;height:7px;border:1.3px solid #444;border-radius:50%"></div></div><div class="a" style="left:1px;top:26px;width:40px;height:28px;background:#f4f4f4"><div class="a" style="left:6px;top:3px;width:10px;height:22px;background:#9a8a80;filter:blur(0.8px);opacity:0.8"></div><div class="a" style="left:18px;top:1px;width:22px;height:22px;background:linear-gradient(160deg,#f4f4f4 0%,#f4f4f4 25%,#302a2a 30%,#4a4545 100%)"></div></div><div class="a" style="left:70px;top:28.0px;width:14px;height:1px;background:#3a3a48;opacity:0.4"></div><div class="a" style="left:70px;top:30.4px;width:18px;height:1px;background:#3a3a48;opacity:0.4"></div><div class="a" style="left:70px;top:32.8px;width:20px;height:1px;background:#3a3a48;opacity:0.4"></div><div class="a" style="left:46px;top:36.0px;width:12px;height:1px;background:#3a3a48;opacity:0.4"></div><div class="a" style="left:46px;top:38.5px;width:46px;height:1px;background:#3a3a48;opacity:0.4"></div><div class="a" style="left:46px;top:41.0px;width:46px;height:1px;background:#3a3a48;opacity:0.4"></div><div class="a" style="left:46px;top:43.5px;width:44px;height:1px;background:#3a3a48;opacity:0.4"></div><div class="a" style="left:46px;top:46.0px;width:46px;height:1px;background:#3a3a48;opacity:0.4"></div><div class="a" style="left:46px;top:48.5px;width:42px;height:1px;background:#3a3a48;opacity:0.4"></div><div class="a" style="left:46px;top:51.0px;width:30px;height:1px;background:#3a3a48;opacity:0.4"></div><div class="a" style="left:36px;top:56.0px;width:22px;height:1px;background:#3a3a48;opacity:0.5"></div><div class="a" style="left:36px;top:58.4px;width:22px;height:1px;background:#3a3a48;opacity:0.5"></div><div class="a" style="left:12px;top:62.0px;width:72px;height:1px;background:#3a3a48;opacity:0.5"></div></div></div>
<div class="a" style="left:183px;top:332px;width:97px;height:72px;background:linear-gradient(100deg,#b3bfcb 0%,#c2ccd6 35%,#c8d0d9 55%,#bfc9d3 80%,#b2bec9 100%);overflow:hidden"><div class="a" style="left:0;top:0;width:97px;height:72px;filter:blur(0.35px)"><div class="a" style="left:8.0px;top:3px;width:80px;text-align:center;white-space:nowrap;font-family:'Liberation Serif',serif;font-weight:bold;font-size:6.8px;line-height:6.8px;color:#2e2e3a;opacity:0.8">10 грудня – Міжнародний</div><div class="a" style="left:18.0px;top:10px;width:60px;text-align:center;white-space:nowrap;font-family:'Liberation Serif',serif;font-weight:bold;font-size:6.8px;line-height:6.8px;color:#2e2e3a;opacity:0.8">день прав людини</div><div class="a" style="left:5px;top:22.0px;width:44px;height:1px;background:#3a3a48;opacity:0.4"></div><div class="a" style="left:5px;top:24.4px;width:52px;height:1px;background:#3a3a48;opacity:0.4"></div><div class="a" style="left:5px;top:26.8px;width:50px;height:1px;background:#3a3a48;opacity:0.4"></div><div class="a" style="left:5px;top:29.2px;width:48px;height:1px;background:#3a3a48;opacity:0.4"></div><div class="a" style="left:5px;top:31.6px;width:52px;height:1px;background:#3a3a48;opacity:0.4"></div><div class="a" style="left:5px;top:34.0px;width:46px;height:1px;background:#3a3a48;opacity:0.4"></div><div class="a" style="left:5px;top:36.4px;width:50px;height:1px;background:#3a3a48;opacity:0.4"></div><div class="a" style="left:5px;top:38.8px;width:48px;height:1px;background:#3a3a48;opacity:0.4"></div><div class="a" style="left:5px;top:41.2px;width:52px;height:1px;background:#3a3a48;opacity:0.4"></div><div class="a" style="left:5px;top:43.6px;width:40px;height:1px;background:#3a3a48;opacity:0.4"></div><div class="a" style="left:5px;top:46.0px;width:38px;height:1px;background:#3a3a48;opacity:0.4"></div><div class="a" style="left:5px;top:48.4px;width:30px;height:1px;background:#3a3a48;opacity:0.4"></div><div class="a" style="left:5px;top:50.8px;width:46px;height:1px;background:#3a3a48;opacity:0.4"></div><div class="a" style="left:5px;top:53.2px;width:50px;height:1px;background:#3a3a48;opacity:0.4"></div><div class="a" style="left:5px;top:55.6px;width:48px;height:1px;background:#3a3a48;opacity:0.4"></div><div class="a" style="left:5px;top:58.0px;width:44px;height:1px;background:#3a3a48;opacity:0.4"></div><div class="a" style="left:5px;top:60.4px;width:50px;height:1px;background:#3a3a48;opacity:0.4"></div><div class="a" style="left:5px;top:62.8px;width:42px;height:1px;background:#3a3a48;opacity:0.4"></div><div class="a" style="left:61px;top:25px;width:34px;height:28px;background:#4a3e3c"><div class="a" style="left:13px;top:4px;width:19px;height:19px;background:#e6e4de;transform:rotate(-14deg);filter:blur(0.4px)"></div><div class="a" style="left:2px;top:8px;width:10px;height:20px;border-radius:40% 40% 0 0;background:#202428"></div></div></div></div>
<div class="a" style="left:179px;top:416px;width:105px;height:80px;border:2.5px solid #e0603a"></div>
<div class="a" style="left:183px;top:420px;width:97px;height:72px;background:linear-gradient(100deg,#b3bfcb 0%,#c2ccd6 35%,#c8d0d9 55%,#bfc9d3 80%,#b2bec9 100%);overflow:hidden"><div class="a" style="left:0;top:0;width:97px;height:72px;filter:blur(0.35px)"><div class="a" style="left:3.0px;top:1.5px;width:90px;text-align:center;white-space:nowrap;font-family:'Liberation Serif',serif;font-weight:bold;font-size:6.8px;line-height:6.8px;color:#2e2e3a;opacity:0.8">Зміст Загальної Декларації</div><div class="a" style="left:23.0px;top:8.5px;width:50px;text-align:center;white-space:nowrap;font-family:'Liberation Serif',serif;font-weight:bold;font-size:6.8px;line-height:6.8px;color:#2e2e3a;opacity:0.8">прав людини</div><div class="a" style="left:4px;top:19.0px;width:34px;height:1.1px;background:#3a3a48;opacity:0.5"></div><div class="a" style="left:4px;top:21.6px;width:30px;height:1.1px;background:#3a3a48;opacity:0.5"></div><div class="a" style="left:4px;top:24.2px;width:33px;height:1.1px;background:#3a3a48;opacity:0.5"></div><div class="a" style="left:4px;top:26.8px;width:30px;height:1.1px;background:#3a3a48;opacity:0.5"></div><div class="a" style="left:4px;top:29.4px;width:34px;height:1.1px;background:#3a3a48;opacity:0.5"></div><div class="a" style="left:4px;top:32.0px;width:33px;height:1.1px;background:#3a3a48;opacity:0.5"></div><div class="a" style="left:4px;top:34.6px;width:34px;height:1.1px;background:#3a3a48;opacity:0.5"></div><div class="a" style="left:4px;top:37.2px;width:36px;height:1.1px;background:#3a3a48;opacity:0.5"></div><div class="a" style="left:4px;top:39.8px;width:36px;height:1.1px;background:#3a3a48;opacity:0.5"></div><div class="a" style="left:4px;top:42.4px;width:34px;height:1.1px;background:#3a3a48;opacity:0.5"></div><div class="a" style="left:4px;top:45.0px;width:32px;height:1.1px;background:#3a3a48;opacity:0.5"></div><div class="a" style="left:4px;top:47.6px;width:36px;height:1.1px;background:#3a3a48;opacity:0.5"></div><div class="a" style="left:4px;top:50.2px;width:36px;height:1.1px;background:#3a3a48;opacity:0.5"></div><div class="a" style="left:4px;top:52.8px;width:35px;height:1.1px;background:#3a3a48;opacity:0.5"></div><div class="a" style="left:4px;top:55.4px;width:30px;height:1.1px;background:#3a3a48;opacity:0.5"></div><div class="a" style="left:4px;top:58.0px;width:36px;height:1.1px;background:#3a3a48;opacity:0.5"></div><div class="a" style="left:4px;top:60.6px;width:34px;height:1.1px;background:#3a3a48;opacity:0.5"></div><div class="a" style="left:4px;top:63.2px;width:36px;height:1.1px;background:#3a3a48;opacity:0.5"></div><div class="a" style="left:4px;top:65.8px;width:30px;height:1.1px;background:#3a3a48;opacity:0.5"></div><div class="a" style="left:4px;top:68.4px;width:28px;height:1.1px;background:#3a3a48;opacity:0.5"></div><div class="a" style="left:53px;top:16px;width:41px;height:55px;background:#eceef1;filter:blur(0.8px)"></div><div class="a" style="left:56px;top:18px;width:7px;height:6px;background:#8a8a8a"></div><div class="a" style="left:65px;top:20px;width:26px;height:4px;background:#555;opacity:0.45"></div><div class="a" style="left:56px;top:27.0px;width:35px;height:1px;background:#777;opacity:0.4"></div><div class="a" style="left:56px;top:28.7px;width:35px;height:1px;background:#777;opacity:0.4"></div><div class="a" style="left:56px;top:30.4px;width:35px;height:1px;background:#777;opacity:0.4"></div><div class="a" style="left:56px;top:32.1px;width:35px;height:1px;background:#777;opacity:0.4"></div><div class="a" style="left:56px;top:33.8px;width:35px;height:1px;background:#777;opacity:0.4"></div><div class="a" style="left:56px;top:35.5px;width:35px;height:1px;background:#777;opacity:0.4"></div><div class="a" style="left:56px;top:37.2px;width:35px;height:1px;background:#777;opacity:0.4"></div><div class="a" style="left:57px;top:40.0px;width:9px;height:1px;background:#999;opacity:0.4"></div><div class="a" style="left:57px;top:41.8px;width:9px;height:1px;background:#999;opacity:0.4"></div><div class="a" style="left:57px;top:43.6px;width:9px;height:1px;background:#999;opacity:0.4"></div><div class="a" style="left:57px;top:45.4px;width:9px;height:1px;background:#999;opacity:0.4"></div><div class="a" style="left:57px;top:47.2px;width:9px;height:1px;background:#999;opacity:0.4"></div><div class="a" style="left:57px;top:49.0px;width:9px;height:1px;background:#999;opacity:0.4"></div><div class="a" style="left:57px;top:50.8px;width:9px;height:1px;background:#999;opacity:0.4"></div><div class="a" style="left:57px;top:52.6px;width:9px;height:1px;background:#999;opacity:0.4"></div><div class="a" style="left:57px;top:54.4px;width:9px;height:1px;background:#999;opacity:0.4"></div><div class="a" style="left:57px;top:56.2px;width:9px;height:1px;background:#999;opacity:0.4"></div><div class="a" style="left:57px;top:58.0px;width:9px;height:1px;background:#999;opacity:0.4"></div><div class="a" style="left:57px;top:59.8px;width:9px;height:1px;background:#999;opacity:0.4"></div><div class="a" style="left:57px;top:61.6px;width:9px;height:1px;background:#999;opacity:0.4"></div><div class="a" style="left:69px;top:40.0px;width:9px;height:1px;background:#999;opacity:0.4"></div><div class="a" style="left:69px;top:41.8px;width:9px;height:1px;background:#999;opacity:0.4"></div><div class="a" style="left:69px;top:43.6px;width:9px;height:1px;background:#999;opacity:0.4"></div><div class="a" style="left:69px;top:45.4px;width:9px;height:1px;background:#999;opacity:0.4"></div><div class="a" style="left:69px;top:47.2px;width:9px;height:1px;background:#999;opacity:0.4"></div><div class="a" style="left:69px;top:49.0px;width:9px;height:1px;background:#999;opacity:0.4"></div><div class="a" style="left:69px;top:50.8px;width:9px;height:1px;background:#999;opacity:0.4"></div><div class="a" style="left:69px;top:52.6px;width:9px;height:1px;background:#999;opacity:0.4"></div><div class="a" style="left:69px;top:54.4px;width:9px;height:1px;background:#999;opacity:0.4"></div><div class="a" style="left:69px;top:56.2px;width:9px;height:1px;background:#999;opacity:0.4"></div><div class="a" style="left:69px;top:58.0px;width:9px;height:1px;background:#999;opacity:0.4"></div><div class="a" style="left:69px;top:59.8px;width:9px;height:1px;background:#999;opacity:0.4"></div><div class="a" style="left:69px;top:61.6px;width:9px;height:1px;background:#999;opacity:0.4"></div><div class="a" style="left:81px;top:40.0px;width:9px;height:1px;background:#999;opacity:0.4"></div><div class="a" style="left:81px;top:41.8px;width:9px;height:1px;background:#999;opacity:0.4"></div><div class="a" style="left:81px;top:43.6px;width:9px;height:1px;background:#999;opacity:0.4"></div><div class="a" style="left:81px;top:45.4px;width:9px;height:1px;background:#999;opacity:0.4"></div><div class="a" style="left:81px;top:47.2px;width:9px;height:1px;background:#999;opacity:0.4"></div><div class="a" style="left:81px;top:49.0px;width:9px;height:1px;background:#999;opacity:0.4"></div><div class="a" style="left:81px;top:50.8px;width:9px;height:1px;background:#999;opacity:0.4"></div><div class="a" style="left:81px;top:52.6px;width:9px;height:1px;background:#999;opacity:0.4"></div><div class="a" style="left:81px;top:54.4px;width:9px;height:1px;background:#999;opacity:0.4"></div><div class="a" style="left:81px;top:56.2px;width:9px;height:1px;background:#999;opacity:0.4"></div><div class="a" style="left:81px;top:58.0px;width:9px;height:1px;background:#999;opacity:0.4"></div><div class="a" style="left:81px;top:59.8px;width:9px;height:1px;background:#999;opacity:0.4"></div><div class="a" style="left:81px;top:61.6px;width:9px;height:1px;background:#999;opacity:0.4"></div><div class="a" style="left:56px;top:66px;width:24px;height:3px;background:#808080"></div></div></div>
<div class="a" style="left:183px;top:510px;width:97px;height:72px;background:linear-gradient(100deg,#b3bfcb 0%,#c2ccd6 35%,#c8d0d9 55%,#bfc9d3 80%,#b2bec9 100%);overflow:hidden"><div class="a" style="left:0;top:0;width:97px;height:72px;filter:blur(0.35px)"><div class="a" style="left:23px;top:0px;width:50px;height:30px;background:linear-gradient(90deg,#505050 0%,#8a8a8a 15%,#d8d8d8 40%,#a0a0a0 55%,#5a5a5a 65%,#9a9a9a 80%,#4a4a4a 100%)"></div><div class="a" style="left:23px;top:24px;width:50px;height:6px;background:#2a2a2a;opacity:0.6"></div><div class="a" style="left:6px;top:31px;width:12px;height:2px;background:#222;opacity:0.7"></div><div class="a" style="left:19px;top:31.0px;width:76px;height:1px;background:#3a3a48;opacity:0.4"></div><div class="a" style="left:19px;top:33.3px;width:76px;height:1px;background:#3a3a48;opacity:0.4"></div><div class="a" style="left:6px;top:36.0px;width:89px;height:1px;background:#3a3a48;opacity:0.4"></div><div class="a" style="left:6px;top:38.4px;width:86px;height:1px;background:#3a3a48;opacity:0.4"></div><div class="a" style="left:6px;top:40.8px;width:89px;height:1px;background:#3a3a48;opacity:0.4"></div><div class="a" style="left:6px;top:43.2px;width:80px;height:1px;background:#3a3a48;opacity:0.4"></div><div class="a" style="left:6px;top:45.6px;width:88px;height:1px;background:#3a3a48;opacity:0.4"></div><div class="a" style="left:6px;top:48.0px;width:70px;height:1px;background:#3a3a48;opacity:0.4"></div><div class="a" style="left:6px;top:50.4px;width:89px;height:1px;background:#3a3a48;opacity:0.4"></div><div class="a" style="left:6px;top:52.8px;width:60px;height:1px;background:#3a3a48;opacity:0.4"></div><div class="a" style="left:6px;top:55.2px;width:85px;height:1px;background:#3a3a48;opacity:0.4"></div><div class="a" style="left:6px;top:57.6px;width:89px;height:1px;background:#3a3a48;opacity:0.4"></div><div class="a" style="left:6px;top:60.0px;width:80px;height:1px;background:#3a3a48;opacity:0.4"></div><div class="a" style="left:6px;top:62.4px;width:70px;height:1px;background:#3a3a48;opacity:0.4"></div></div></div>
<div class="a" style="left:183px;top:598px;width:97px;height:18px;background:linear-gradient(100deg,#b3bfcb 0%,#c2ccd6 35%,#c8d0d9 55%,#bfc9d3 80%,#b2bec9 100%);overflow:hidden"><div class="a" style="left:0;top:0;width:97px;height:18px;filter:blur(0.35px)"><div class="a" style="left:26px;top:0;width:46px;height:16px;background:linear-gradient(90deg,#f0f0f0 0%,#4a4a4a 10%,#8a8680 40%,#c0c0c0 60%,#3a3a3a 75%,#e6e6e6 100%)"></div></div></div>
<svg style="left:267px;top:453px" width="9" height="14"><path d="M1 1 V12 L3.8 9.5 L5.8 13 L7.3 12.2 L5.4 8.8 H8.8Z" fill="#fff" stroke="#222" stroke-width="0.9"/></svg>
<div class="a" style="left:309px;top:230px;width:800px;height:362px;background:#e6e6e6"></div>
<div class="a" style="left:1109px;top:230px;width:13px;height:362px;background:#e0e0e0"></div>
<div class="a" style="left:1111px;top:362px;width:10px;height:59px;background:#fff;border:1px solid #d8d8d8"></div>
<svg style="left:1113px;top:232px" width="7" height="5"><path d="M0.5 4 L3.5 0.5 L6.5 4Z" fill="#555"/></svg>
<svg style="left:1113px;top:544px" width="7" height="5"><path d="M0.5 0.5 L3.5 4 L6.5 0.5Z" fill="#555"/></svg>
<svg style="left:1113px;top:554px" width="7" height="8"><path d="M0.5 3.5 L3.5 0.5 L6.5 3.5 M0.5 7 L3.5 4 L6.5 7" fill="none" stroke="#666"/></svg>
<svg style="left:1113px;top:567px" width="7" height="8"><path d="M0.5 0.5 L3.5 3.5 L6.5 0.5 M0.5 4 L3.5 7 L6.5 4" fill="none" stroke="#666"/></svg>
<div class="a" style="left:481px;top:237px;width:460px;height:345px;overflow:hidden;background:linear-gradient(90deg,#a2adb9 0%,#aab5c1 12%,#b6c0ca 30%,#bcc5ce 50%,#b9c2cb 70%,#b6bfc9 85%,#a9b4c0 100%)">
 <div class="a" style="left:0;top:0;width:460px;height:70px;background:linear-gradient(180deg,rgba(185,193,202,0.6),rgba(185,193,202,0))"></div>
 <div class="a" style="left:-60px;top:0;width:160px;height:345px;background:linear-gradient(90deg,rgba(150,162,175,0.5),rgba(150,162,175,0))"></div>
 <div class="a" style="left:150px;top:140px;width:140px;height:210px;background:radial-gradient(ellipse at 50% 50%,rgba(200,208,216,0.55),rgba(200,208,216,0) 65%)"></div>
 <div class="a" style="left:370px;top:0;width:60px;height:80px;background:linear-gradient(90deg,rgba(205,212,220,0),rgba(205,212,220,0.6),rgba(205,212,220,0))"></div>
 <svg style="left:0;top:0;filter:blur(2.5px)" width="460" height="345"><ellipse cx="221.8" cy="219.0" rx="5" ry="13" transform="rotate(-140.0 221.8 219.0)" fill="#dfe5ec" opacity="0.28"/><ellipse cx="234.2" cy="210.6" rx="4" ry="11" transform="rotate(-80.0 234.2 210.6)" fill="#dfe5ec" opacity="0.2"/><ellipse cx="218.3" cy="197.8" rx="5" ry="13" transform="rotate(-129.0 218.3 197.8)" fill="#dfe5ec" opacity="0.45"/><ellipse cx="232.0" cy="191.9" rx="4" ry="11" transform="rotate(-69.0 232.0 191.9)" fill="#dfe5ec" opacity="0.35"/><ellipse cx="218.8" cy="176.4" rx="5" ry="13" transform="rotate(-118.0 218.8 176.4)" fill="#dfe5ec" opacity="0.45"/><ellipse cx="233.4" cy="173.2" rx="4" ry="11" transform="rotate(-58.0 233.4 173.2)" fill="#dfe5ec" opacity="0.35"/><ellipse cx="223.5" cy="155.4" rx="5" ry="13" transform="rotate(-107.0 223.5 155.4)" fill="#dfe5ec" opacity="0.45"/><ellipse cx="238.4" cy="155.1" rx="4" ry="11" transform="rotate(-47.0 238.4 155.1)" fill="#dfe5ec" opacity="0.35"/><ellipse cx="232.0" cy="135.7" rx="5" ry="13" transform="rotate(-96.0 232.0 135.7)" fill="#dfe5ec" opacity="0.45"/><ellipse cx="246.8" cy="138.3" rx="4" ry="11" transform="rotate(-36.0 246.8 138.3)" fill="#dfe5ec" opacity="0.35"/><ellipse cx="244.2" cy="118.0" rx="5" ry="13" transform="rotate(-85.0 244.2 118.0)" fill="#dfe5ec" opacity="0.45"/><ellipse cx="258.2" cy="123.3" rx="4" ry="11" transform="rotate(-25.0 258.2 123.3)" fill="#dfe5ec" opacity="0.35"/><ellipse cx="259.5" cy="103.0" rx="5" ry="13" transform="rotate(-74.0 259.5 103.0)" fill="#dfe5ec" opacity="0.45"/><ellipse cx="272.2" cy="110.9" rx="4" ry="11" transform="rotate(-14.0 272.2 110.9)" fill="#dfe5ec" opacity="0.35"/><ellipse cx="277.4" cy="91.1" rx="5" ry="13" transform="rotate(-63.0 277.4 91.1)" fill="#dfe5ec" opacity="0.45"/><ellipse cx="288.4" cy="101.3" rx="4" ry="11" transform="rotate(-3.0 288.4 101.3)" fill="#dfe5ec" opacity="0.35"/><ellipse cx="297.3" cy="82.9" rx="5" ry="13" transform="rotate(-52.0 297.3 82.9)" fill="#dfe5ec" opacity="0.45"/><ellipse cx="306.1" cy="95.0" rx="4" ry="11" transform="rotate(8.0 306.1 95.0)" fill="#dfe5ec" opacity="0.35"/>
  <ellipse cx="240" cy="52" rx="30" ry="7" transform="rotate(-15 240 52)" fill="#d8dee6" opacity="0.5"/>
  <ellipse cx="275" cy="40" rx="22" ry="6" transform="rotate(-35 275 40)" fill="#d8dee6" opacity="0.4"/>
  <path d="M150 105 H260" stroke="#d0d7df" stroke-width="3" opacity="0.5"/>
 </svg>
 <div class="a" style="left:249px;top:72px;width:196px;height:270px;background:#e6e8eb;filter:blur(5px)"></div>
</div>
<div class="t" style="left:537.50px;top:244.53px;font-size:26px;line-height:26px;color:#16161c;font-weight:normal;font-family:'Liberation Serif',serif;transform:scaleX(1.1636);transform-origin:0 0;-webkit-text-stroke:0.35px #16161c;">Зміст Загальної Декларації</div>
<div class="t" style="left:627.50px;top:274.73px;font-size:26px;line-height:26px;color:#16161c;font-weight:normal;font-family:'Liberation Serif',serif;transform:scaleX(1.1725);transform-origin:0 0;-webkit-text-stroke:0.35px #16161c;">прав людини</div>
<div class="t" style="left:512.50px;top:316.62px;font-size:11.2px;line-height:11.2px;color:#2a2a32;font-weight:bold;font-family:'Liberation Serif',serif;transform:scaleX(1.075);transform-origin:0 0;">Складається з преамбули та</div>
<div class="t" style="left:512.50px;top:329.62px;font-size:11.2px;line-height:11.2px;color:#2a2a32;font-weight:bold;font-family:'Liberation Serif',serif;transform:scaleX(1.075);transform-origin:0 0;">30-ти статей. Документ</div>
<div class="t" style="left:512.50px;top:342.62px;font-size:11.2px;line-height:11.2px;color:#2a2a32;font-weight:bold;font-family:'Liberation Serif',serif;transform:scaleX(1.075);transform-origin:0 0;">проголосив невід'ємне й</div>
<div class="t" style="left:512.50px;top:355.62px;font-size:11.2px;line-height:11.2px;color:#2a2a32;font-weight:bold;font-family:'Liberation Serif',serif;transform:scaleX(1.075);transform-origin:0 0;">обов'язкове дотримання</div>
<div class="t" style="left:512.50px;top:368.62px;font-size:11.2px;line-height:11.2px;color:#2a2a32;font-weight:bold;font-family:'Liberation Serif',serif;transform:scaleX(1.075);transform-origin:0 0;">громадянських, політичних,</div>
<div class="t" style="left:512.50px;top:381.62px;font-size:11.2px;line-height:11.2px;color:#2a2a32;font-weight:bold;font-family:'Liberation Serif',serif;transform:scaleX(1.075);transform-origin:0 0;">економічних, соціальних і</div>
<div class="t" style="left:512.50px;top:394.62px;font-size:11.2px;line-height:11.2px;color:#2a2a32;font-weight:bold;font-family:'Liberation Serif',serif;transform:scaleX(1.075);transform-origin:0 0;">культурних прав людини.</div>
<div class="t" style="left:512.50px;top:407.62px;font-size:11.2px;line-height:11.2px;color:#2a2a32;font-weight:bold;font-family:'Liberation Serif',serif;transform:scaleX(1.075);transform-origin:0 0;">Статті базуються на визнанні</div>
<div class="t" style="left:512.50px;top:420.62px;font-size:11.2px;line-height:11.2px;color:#2a2a32;font-weight:bold;font-family:'Liberation Serif',serif;transform:scaleX(1.075);transform-origin:0 0;">гідності всіх людей, рівності</div>
<div class="t" style="left:512.50px;top:433.62px;font-size:11.2px;line-height:11.2px;color:#2a2a32;font-weight:bold;font-family:'Liberation Serif',serif;transform:scaleX(1.075);transform-origin:0 0;">їхніх прав, що є необхідною</div>
<div class="t" style="left:512.50px;top:446.62px;font-size:11.2px;line-height:11.2px;color:#2a2a32;font-weight:bold;font-family:'Liberation Serif',serif;transform:scaleX(1.075);transform-origin:0 0;">передумовою свободи,</div>
<div class="t" style="left:512.50px;top:459.62px;font-size:11.2px;line-height:11.2px;color:#2a2a32;font-weight:bold;font-family:'Liberation Serif',serif;transform:scaleX(1.075);transform-origin:0 0;">справедливості та загального</div>
<div class="t" style="left:512.50px;top:472.62px;font-size:11.2px;line-height:11.2px;color:#2a2a32;font-weight:bold;font-family:'Liberation Serif',serif;transform:scaleX(1.075);transform-origin:0 0;">миру. Декларація проголошує,</div>
<div class="t" style="left:512.50px;top:485.62px;font-size:11.2px;line-height:11.2px;color:#2a2a32;font-weight:bold;font-family:'Liberation Serif',serif;transform:scaleX(1.075);transform-origin:0 0;">що права і свободи людини не</div>
<div class="t" style="left:512.50px;top:498.62px;font-size:11.2px;line-height:11.2px;color:#2a2a32;font-weight:bold;font-family:'Liberation Serif',serif;transform:scaleX(1.075);transform-origin:0 0;">можуть бути обмежені за</div>
<div class="t" style="left:512.50px;top:511.62px;font-size:11.2px;line-height:11.2px;color:#2a2a32;font-weight:bold;font-family:'Liberation Serif',serif;transform:scaleX(1.075);transform-origin:0 0;">ознаками статі, раси, кольору</div>
<div class="t" style="left:512.50px;top:524.62px;font-size:11.2px;line-height:11.2px;color:#2a2a32;font-weight:bold;font-family:'Liberation Serif',serif;transform:scaleX(1.075);transform-origin:0 0;">шкіри, мови, релігії, політ.</div>
<div class="t" style="left:512.50px;top:537.62px;font-size:11.2px;line-height:11.2px;color:#2a2a32;font-weight:bold;font-family:'Liberation Serif',serif;transform:scaleX(1.075);transform-origin:0 0;">переконань, національного або</div>
<div class="t" style="left:512.50px;top:550.62px;font-size:11.2px;line-height:11.2px;color:#2a2a32;font-weight:bold;font-family:'Liberation Serif',serif;transform:scaleX(1.075);transform-origin:0 0;">соціального походження,</div>
<div class="t" style="left:512.50px;top:563.62px;font-size:11.2px;line-height:11.2px;color:#2a2a32;font-weight:bold;font-family:'Liberation Serif',serif;transform:scaleX(1.075);transform-origin:0 0;">майнового стану.</div>
<div class="a" style="left:496px;top:320px;width:3px;height:3px;border-radius:50%;background:#333"></div>
<div class="a" style="left:736px;top:315px;width:184px;height:258px;background:#eff0f2;filter:blur(1px)"></div>
<div class="a" style="left:744px;top:317px;width:42px;height:38px;background:#8c8c8e"></div>
<svg style="left:751px;top:322px" width="28" height="28"><circle cx="14" cy="13" r="8" fill="none" stroke="#f2f2f2" stroke-width="1.3"/><path d="M10 10 C12 8 16 9 17 12 C15 14 13 17 11 15Z" fill="#f2f2f2" opacity="0.8"/><path d="M14 5 V21 M6 13 H22" stroke="#f2f2f2" stroke-width="0.5"/><path d="M4 19 C2 12 4 6 8 3 M24 19 C26 12 24 6 20 3 M6 22 C10 25 18 25 22 22" stroke="#f2f2f2" stroke-width="1.8" fill="none"/></svg>
<div class="t" style="left:790.00px;top:331.81px;font-size:6.2px;line-height:6.2px;color:#333;font-weight:bold;font-family:'Liberation Serif',serif;transform:scaleX(1.2116);transform-origin:0 0;">THE UNIVERSAL DECLARATION</div>
<div class="t" style="left:790.00px;top:349.98px;font-size:6px;line-height:6px;color:#333;font-weight:bold;font-family:'Liberation Serif',serif;transform:scaleX(1.0787);transform-origin:0 0;">OF</div>
<div class="t" style="left:801.00px;top:339.25px;font-size:20px;line-height:20px;color:#2a2a2a;font-weight:bold;font-family:'Liberation Serif',serif;transform:scaleX(0.8638);transform-origin:0 0;letter-spacing:-0.3px;">Human Rights</div>
<div class="a" style="left:745px;top:363px;width:7px;height:2px;background:#2a2a2a;opacity:0.9"></div>
<div class="a" style="left:754px;top:363px;width:72px;height:2px;opacity:0.42;background:repeating-linear-gradient(180deg,#6a6a6a 0px,#6a6a6a 0.9px,transparent 0.9px,transparent 1.8px)"></div><div class="a" style="left:745px;top:365px;width:81px;height:6px;opacity:0.42;background:repeating-linear-gradient(180deg,#6a6a6a 0px,#6a6a6a 0.9px,transparent 0.9px,transparent 1.8px)"></div>
<div class="a" style="left:745px;top:374px;width:7px;height:2px;background:#2a2a2a;opacity:0.9"></div>
<div class="a" style="left:754px;top:374px;width:72px;height:2px;opacity:0.42;background:repeating-linear-gradient(180deg,#6a6a6a 0px,#6a6a6a 0.9px,transparent 0.9px,transparent 1.8px)"></div><div class="a" style="left:745px;top:376px;width:81px;height:12px;opacity:0.42;background:repeating-linear-gradient(180deg,#6a6a6a 0px,#6a6a6a 0.9px,transparent 0.9px,transparent 1.8px)"></div>
<div class="a" style="left:745px;top:391px;width:7px;height:2px;background:#2a2a2a;opacity:0.9"></div>
<div class="a" style="left:754px;top:391px;width:72px;height:2px;opacity:0.42;background:repeating-linear-gradient(180deg,#6a6a6a 0px,#6a6a6a 0.9px,transparent 0.9px,transparent 1.8px)"></div><div class="a" style="left:745px;top:393px;width:81px;height:5px;opacity:0.42;background:repeating-linear-gradient(180deg,#6a6a6a 0px,#6a6a6a 0.9px,transparent 0.9px,transparent 1.8px)"></div>
<div class="a" style="left:745px;top:402px;width:7px;height:2px;background:#2a2a2a;opacity:0.9"></div>
<div class="a" style="left:754px;top:402px;width:72px;height:2px;opacity:0.42;background:repeating-linear-gradient(180deg,#6a6a6a 0px,#6a6a6a 0.9px,transparent 0.9px,transparent 1.8px)"></div><div class="a" style="left:745px;top:404px;width:81px;height:2px;opacity:0.42;background:repeating-linear-gradient(180deg,#6a6a6a 0px,#6a6a6a 0.9px,transparent 0.9px,transparent 1.8px)"></div>
<div class="a" style="left:745px;top:410px;width:7px;height:2px;background:#2a2a2a;opacity:0.9"></div>
<div class="a" style="left:754px;top:410px;width:72px;height:2px;opacity:0.42;background:repeating-linear-gradient(180deg,#6a6a6a 0px,#6a6a6a 0.9px,transparent 0.9px,transparent 1.8px)"></div><div class="a" style="left:745px;top:412px;width:81px;height:4px;opacity:0.42;background:repeating-linear-gradient(180deg,#6a6a6a 0px,#6a6a6a 0.9px,transparent 0.9px,transparent 1.8px)"></div>
<div class="a" style="left:830px;top:363px;width:81px;height:8px;opacity:0.42;background:repeating-linear-gradient(180deg,#6a6a6a 0px,#6a6a6a 0.9px,transparent 0.9px,transparent 1.8px)"></div>
<div class="a" style="left:830px;top:372px;width:8px;height:2px;background:#2a2a2a;opacity:0.9"></div>
<div class="a" style="left:840px;top:372px;width:70px;height:2px;opacity:0.42;background:repeating-linear-gradient(180deg,#6a6a6a 0px,#6a6a6a 0.9px,transparent 0.9px,transparent 1.8px)"></div><div class="a" style="left:830px;top:374px;width:81px;height:4px;opacity:0.42;background:repeating-linear-gradient(180deg,#6a6a6a 0px,#6a6a6a 0.9px,transparent 0.9px,transparent 1.8px)"></div>
<div class="a" style="left:830px;top:383px;width:8px;height:2px;background:#2a2a2a;opacity:0.9"></div>
<div class="a" style="left:840px;top:383px;width:70px;height:2px;opacity:0.42;background:repeating-linear-gradient(180deg,#6a6a6a 0px,#6a6a6a 0.9px,transparent 0.9px,transparent 1.8px)"></div><div class="a" style="left:830px;top:385px;width:81px;height:2px;opacity:0.42;background:repeating-linear-gradient(180deg,#6a6a6a 0px,#6a6a6a 0.9px,transparent 0.9px,transparent 1.8px)"></div>
<div class="a" style="left:830px;top:391px;width:8px;height:2px;background:#2a2a2a;opacity:0.9"></div>
<div class="a" style="left:840px;top:391px;width:70px;height:2px;opacity:0.42;background:repeating-linear-gradient(180deg,#6a6a6a 0px,#6a6a6a 0.9px,transparent 0.9px,transparent 1.8px)"></div><div class="a" style="left:830px;top:393px;width:81px;height:0px;opacity:0.42;background:repeating-linear-gradient(180deg,#6a6a6a 0px,#6a6a6a 0.9px,transparent 0.9px,transparent 1.8px)"></div>
<div class="a" style="left:830px;top:395px;width:81px;height:20px;opacity:0.42;background:repeating-linear-gradient(180deg,#6a6a6a 0px,#6a6a6a 0.9px,transparent 0.9px,transparent 1.8px)"></div>
<div class="a" style="left:756px;top:426.0px;width:38px;height:1px;background:#888;opacity:0.55"></div>
<div class="a" style="left:748px;top:428.2px;width:47px;height:6.6000000000000005px;opacity:0.4;background:repeating-linear-gradient(180deg,#8a8a8a 0px,#8a8a8a 0.9px,transparent 0.9px,transparent 2.2px)"></div>
<div class="a" style="left:756px;top:437.6px;width:38px;height:1px;background:#888;opacity:0.55"></div>
<div class="a" style="left:748px;top:439.8px;width:47px;height:11.0px;opacity:0.4;background:repeating-linear-gradient(180deg,#8a8a8a 0px,#8a8a8a 0.9px,transparent 0.9px,transparent 2.2px)"></div>
<div class="a" style="left:756px;top:453.6px;width:38px;height:1px;background:#888;opacity:0.55"></div>
<div class="a" style="left:748px;top:455.8px;width:47px;height:11.0px;opacity:0.4;background:repeating-linear-gradient(180deg,#8a8a8a 0px,#8a8a8a 0.9px,transparent 0.9px,transparent 2.2px)"></div>
<div class="a" style="left:756px;top:469.6px;width:38px;height:1px;background:#888;opacity:0.55"></div>
<div class="a" style="left:748px;top:471.8px;width:47px;height:6.6000000000000005px;opacity:0.4;background:repeating-linear-gradient(180deg,#8a8a8a 0px,#8a8a8a 0.9px,transparent 0.9px,transparent 2.2px)"></div>
<div class="a" style="left:756px;top:481.2px;width:38px;height:1px;background:#888;opacity:0.55"></div>
<div class="a" style="left:748px;top:483.40000000000003px;width:47px;height:6.6000000000000005px;opacity:0.4;background:repeating-linear-gradient(180deg,#8a8a8a 0px,#8a8a8a 0.9px,transparent 0.9px,transparent 2.2px)"></div>
<div class="a" style="left:756px;top:492.8px;width:38px;height:1px;background:#888;opacity:0.55"></div>
<div class="a" style="left:748px;top:495.00000000000006px;width:47px;height:11.0px;opacity:0.4;background:repeating-linear-gradient(180deg,#8a8a8a 0px,#8a8a8a 0.9px,transparent 0.9px,transparent 2.2px)"></div>
<div class="a" style="left:756px;top:508.8px;width:38px;height:1px;background:#888;opacity:0.55"></div>
<div class="a" style="left:748px;top:511.00000000000006px;width:47px;height:8.8px;opacity:0.4;background:repeating-linear-gradient(180deg,#8a8a8a 0px,#8a8a8a 0.9px,transparent 0.9px,transparent 2.2px)"></div>
<div class="a" style="left:756px;top:522.6px;width:38px;height:1px;background:#888;opacity:0.55"></div>
<div class="a" style="left:748px;top:524.8000000000001px;width:47px;height:13.200000000000001px;opacity:0.4;background:repeating-linear-gradient(180deg,#8a8a8a 0px,#8a8a8a 0.9px,transparent 0.9px,transparent 2.2px)"></div>
<div class="a" style="left:756px;top:540.8px;width:38px;height:1px;background:#888;opacity:0.55"></div>
<div class="a" style="left:748px;top:543.0000000000001px;width:47px;height:6.199999999999932px;opacity:0.4;background:repeating-linear-gradient(180deg,#8a8a8a 0px,#8a8a8a 0.9px,transparent 0.9px,transparent 2.2px)"></div>
<div class="a" style="left:814px;top:426.0px;width:38px;height:1px;background:#888;opacity:0.55"></div>
<div class="a" style="left:806px;top:428.2px;width:47px;height:4.4px;opacity:0.4;background:repeating-linear-gradient(180deg,#8a8a8a 0px,#8a8a8a 0.9px,transparent 0.9px,transparent 2.2px)"></div>
<div class="a" style="left:814px;top:435.4px;width:38px;height:1px;background:#888;opacity:0.55"></div>
<div class="a" style="left:806px;top:437.59999999999997px;width:47px;height:11.0px;opacity:0.4;background:repeating-linear-gradient(180deg,#8a8a8a 0px,#8a8a8a 0.9px,transparent 0.9px,transparent 2.2px)"></div>
<div class="a" style="left:814px;top:451.4px;width:38px;height:1px;background:#888;opacity:0.55"></div>
<div class="a" style="left:806px;top:453.59999999999997px;width:47px;height:4.4px;opacity:0.4;background:repeating-linear-gradient(180deg,#8a8a8a 0px,#8a8a8a 0.9px,transparent 0.9px,transparent 2.2px)"></div>
<div class="a" style="left:814px;top:460.8px;width:38px;height:1px;background:#888;opacity:0.55"></div>
<div class="a" style="left:806px;top:462.99999999999994px;width:47px;height:17.6px;opacity:0.4;background:repeating-linear-gradient(180deg,#8a8a8a 0px,#8a8a8a 0.9px,transparent 0.9px,transparent 2.2px)"></div>
<div class="a" style="left:814px;top:483.4px;width:38px;height:1px;background:#888;opacity:0.55"></div>
<div class="a" style="left:806px;top:485.59999999999997px;width:47px;height:8.8px;opacity:0.4;background:repeating-linear-gradient(180deg,#8a8a8a 0px,#8a8a8a 0.9px,transparent 0.9px,transparent 2.2px)"></div>
<div class="a" style="left:814px;top:497.2px;width:38px;height:1px;background:#888;opacity:0.55"></div>
<div class="a" style="left:806px;top:499.4px;width:47px;height:6.6000000000000005px;opacity:0.4;background:repeating-linear-gradient(180deg,#8a8a8a 0px,#8a8a8a 0.9px,transparent 0.9px,transparent 2.2px)"></div>
<div class="a" style="left:814px;top:508.8px;width:38px;height:1px;background:#888;opacity:0.55"></div>
<div class="a" style="left:806px;top:511.0px;width:47px;height:11.0px;opacity:0.4;background:repeating-linear-gradient(180deg,#8a8a8a 0px,#8a8a8a 0.9px,transparent 0.9px,transparent 2.2px)"></div>
<div class="a" style="left:814px;top:524.8px;width:38px;height:1px;background:#888;opacity:0.55"></div>
<div class="a" style="left:806px;top:527.0px;width:47px;height:6.6000000000000005px;opacity:0.4;background:repeating-linear-gradient(180deg,#8a8a8a 0px,#8a8a8a 0.9px,transparent 0.9px,transparent 2.2px)"></div>
<div class="a" style="left:814px;top:536.4px;width:38px;height:1px;background:#888;opacity:0.55"></div>
<div class="a" style="left:806px;top:538.6px;width:47px;height:6.6000000000000005px;opacity:0.4;background:repeating-linear-gradient(180deg,#8a8a8a 0px,#8a8a8a 0.9px,transparent 0.9px,transparent 2.2px)"></div>
<div class="a" style="left:871px;top:426.0px;width:38px;height:1px;background:#888;opacity:0.55"></div>
<div class="a" style="left:863px;top:428.2px;width:47px;height:13.200000000000001px;opacity:0.4;background:repeating-linear-gradient(180deg,#8a8a8a 0px,#8a8a8a 0.9px,transparent 0.9px,transparent 2.2px)"></div>
<div class="a" style="left:871px;top:444.2px;width:38px;height:1px;background:#888;opacity:0.55"></div>
<div class="a" style="left:863px;top:446.4px;width:47px;height:8.8px;opacity:0.4;background:repeating-linear-gradient(180deg,#8a8a8a 0px,#8a8a8a 0.9px,transparent 0.9px,transparent 2.2px)"></div>
<div class="a" style="left:871px;top:458.0px;width:38px;height:1px;background:#888;opacity:0.55"></div>
<div class="a" style="left:863px;top:460.2px;width:47px;height:11.0px;opacity:0.4;background:repeating-linear-gradient(180deg,#8a8a8a 0px,#8a8a8a 0.9px,transparent 0.9px,transparent 2.2px)"></div>
<div class="a" style="left:871px;top:474.0px;width:38px;height:1px;background:#888;opacity:0.55"></div>
<div class="a" style="left:863px;top:476.2px;width:47px;height:17.6px;opacity:0.4;background:repeating-linear-gradient(180deg,#8a8a8a 0px,#8a8a8a 0.9px,transparent 0.9px,transparent 2.2px)"></div>
<div class="a" style="left:871px;top:496.6px;width:38px;height:1px;background:#888;opacity:0.55"></div>
<div class="a" style="left:863px;top:498.8px;width:47px;height:11.0px;opacity:0.4;background:repeating-linear-gradient(180deg,#8a8a8a 0px,#8a8a8a 0.9px,transparent 0.9px,transparent 2.2px)"></div>
<div class="a" style="left:871px;top:512.6px;width:38px;height:1px;background:#888;opacity:0.55"></div>
<div class="a" style="left:863px;top:514.8000000000001px;width:47px;height:8.8px;opacity:0.4;background:repeating-linear-gradient(180deg,#8a8a8a 0px,#8a8a8a 0.9px,transparent 0.9px,transparent 2.2px)"></div>
<div class="a" style="left:871px;top:526.4px;width:38px;height:1px;background:#888;opacity:0.55"></div>
<div class="a" style="left:863px;top:528.6px;width:47px;height:8.8px;opacity:0.4;background:repeating-linear-gradient(180deg,#8a8a8a 0px,#8a8a8a 0.9px,transparent 0.9px,transparent 2.2px)"></div>
<div class="a" style="left:871px;top:540.2px;width:38px;height:1px;background:#888;opacity:0.55"></div>
<div class="a" style="left:863px;top:542.4px;width:47px;height:6.800000000000068px;opacity:0.4;background:repeating-linear-gradient(180deg,#8a8a8a 0px,#8a8a8a 0.9px,transparent 0.9px,transparent 2.2px)"></div>
<div class="a" style="left:746px;top:558px;width:116px;height:13px;background:#7e7e80"></div>
<div class="t" style="left:757.00px;top:560.12px;font-size:10px;line-height:10px;color:#f4f4f4;font-weight:bold;font-family:'Liberation Serif',serif;transform:scaleX(1.0785);transform-origin:0 0;">UNITED NATIONS</div>
<div class="a" style="left:866px;top:560px;width:50px;height:1px;background:#999;opacity:0.5"></div>
<div class="a" style="left:309px;top:592px;width:813px;height:24px;background:#e6e6e6;border-top:1px solid #d2d2d2"></div>
<div class="t" style="left:318.50px;top:599.03px;font-size:10px;line-height:10px;color:#6e6e6e;font-weight:normal;font-family:'Liberation Sans',sans-serif;transform:scaleX(1.0086);transform-origin:0 0;">Нотатки до слайда</div>
<div class="a" style="left:157px;top:616px;width:965px;height:15px;background:#f1f1f1;border-top:1px solid #dcdcdc"></div>
<div class="t" style="left:163.00px;top:620.30px;font-size:8.5px;line-height:8.5px;color:#555;font-weight:normal;font-family:'Liberation Sans',sans-serif;transform:scaleX(0.8916);transform-origin:0 0;-webkit-text-stroke:0.2px #555;">Слайд 3 з 5</div>
<svg style="left:217px;top:618px" width="12" height="10"><rect x="0.5" y="0.5" width="8" height="8" fill="none" stroke="#888"/><path d="M5 7 L10 2" stroke="#888"/></svg>
<div class="t" style="left:238.60px;top:620.30px;font-size:8.5px;line-height:8.5px;color:#333;font-weight:normal;font-family:'Liberation Sans',sans-serif;transform:scaleX(0.9809);transform-origin:0 0;-webkit-text-stroke:0.2px #333;">українська</div>
<svg style="left:762px;top:619px" width="8" height="9"><path d="M4 0 L6 2 H2Z" fill="#666"/><path d="M0 4 H8 M0 6 H8 M0 8 H8" stroke="#777"/></svg>
<div class="t" style="left:773.00px;top:618.80px;font-size:8.5px;line-height:8.5px;color:#444;font-weight:bold;font-family:'Liberation Sans',sans-serif;transform:scaleX(0.9211);transform-origin:0 0;">Нотатки</div>
<svg style="left:818px;top:618px" width="10" height="10"><path d="M0 0 H10 V7 H4 L1.5 9.5 V7 H0Z" fill="#555"/></svg>
<div class="t" style="left:830.00px;top:618.80px;font-size:8.5px;line-height:8.5px;color:#444;font-weight:bold;font-family:'Liberation Sans',sans-serif;transform:scaleX(0.9400);transform-origin:0 0;">Примітки</div>
<div class="a" style="left:881px;top:615px;width:26px;height:16px;background:#c8c8c8"></div>
<svg style="left:888px;top:618px" width="11" height="9"><rect x="0.5" y="0.5" width="10" height="8" fill="none" stroke="#555"/><rect x="3" y="2.5" width="5" height="3" fill="#777"/></svg>
<svg style="left:914px;top:618px" width="11" height="10"><rect x="0.5" y="0.5" width="4" height="3.5" fill="none" stroke="#777"/><rect x="6.5" y="0.5" width="4" height="3.5" fill="none" stroke="#777"/><rect x="0.5" y="5.5" width="4" height="3.5" fill="none" stroke="#777"/><rect x="6.5" y="5.5" width="4" height="3.5" fill="none" stroke="#777"/></svg>
<svg style="left:941px;top:618px" width="11" height="10"><path d="M0.5 0.5 H5.5 V9.5 H0.5Z M5.5 0.5 H10.5 V9.5 H5.5Z" fill="none" stroke="#777"/></svg>
<svg style="left:968px;top:618px" width="11" height="10"><rect x="0.5" y="0.5" width="10" height="5" fill="none" stroke="#777"/><path d="M5.5 5.5 V9.5 M3 9.5 H8" stroke="#777"/></svg>
<div class="a" style="left:990px;top:623px;width:5px;height:1px;background:#555"></div>
<div class="a" style="left:998px;top:623px;width:70px;height:1px;background:#aaa"></div>
<div class="a" style="left:1020px;top:619px;width:3px;height:9px;background:#555"></div>
<svg style="left:1070px;top:620px" width="7" height="7"><path d="M3.5 0 V7 M0 3.5 H7" stroke="#555"/></svg>
<div class="t" style="left:1084.00px;top:619.23px;font-size:8px;line-height:8px;color:#555;font-weight:normal;font-family:'Liberation Sans',sans-serif;transform:scaleX(0.9366);transform-origin:0 0;">68%</div>
<svg style="left:1107px;top:617px" width="11" height="11"><rect x="0.5" y="0.5" width="10" height="10" fill="none" stroke="#777"/><path d="M2 2 L4 4 M9 2 L7 4 M2 9 L4 7 M9 9 L7 7" stroke="#777"/></svg>
<div class="a" style="left:0;top:631px;width:1280px;height:49px;background:#000"></div>
<div class="t" style="left:30.00px;top:663.69px;font-size:11px;line-height:11px;color:#d8d8d8;font-weight:normal;font-family:'Liberation Sans',sans-serif;transform:scaleX(0.9595);transform-origin:0 0;">Audio</div>
<div class="t" style="left:108.00px;top:663.69px;font-size:11px;line-height:11px;color:#d8d8d8;font-weight:normal;font-family:'Liberation Sans',sans-serif;transform:scaleX(0.9306);transform-origin:0 0;">Video</div>
<div class="t" style="left:440.00px;top:663.69px;font-size:11px;line-height:11px;color:#d8d8d8;font-weight:normal;font-family:'Liberation Sans',sans-serif;transform:scaleX(0.9220);transform-origin:0 0;">Participants</div>
<div class="t" style="left:549.00px;top:663.69px;font-size:11px;line-height:11px;color:#d8d8d8;font-weight:normal;font-family:'Liberation Sans',sans-serif;transform:scaleX(0.9032);transform-origin:0 0;">Chat</div>
<div class="t" style="left:617.00px;top:663.69px;font-size:11px;line-height:11px;color:#d8d8d8;font-weight:normal;font-family:'Liberation Sans',sans-serif;transform:scaleX(0.8696);transform-origin:0 0;">React</div>
<div class="t" style="left:675.00px;top:663.69px;font-size:11px;line-height:11px;color:#d8d8d8;font-weight:normal;font-family:'Liberation Sans',sans-serif;transform:scaleX(0.8804);transform-origin:0 0;">Raise hand</div>
<div class="t" style="left:765.00px;top:663.69px;font-size:11px;line-height:11px;color:#d8d8d8;font-weight:normal;font-family:'Liberation Sans',sans-serif;transform:scaleX(0.8515);transform-origin:0 0;">Share</div>
<div class="t" style="left:841.00px;top:663.69px;font-size:11px;line-height:11px;color:#d8d8d8;font-weight:normal;font-family:'Liberation Sans',sans-serif;transform:scaleX(0.9171);transform-origin:0 0;">Apps</div>
<div class="t" style="left:907.00px;top:663.69px;font-size:11px;line-height:11px;color:#d8d8d8;font-weight:normal;font-family:'Liberation Sans',sans-serif;">More</div>
<div class="t" style="left:1226.00px;top:663.69px;font-size:11px;line-height:11px;color:#d8d8d8;font-weight:normal;font-family:'Liberation Sans',sans-serif;transform:scaleX(0.8671);transform-origin:0 0;">Leave</div>
<svg style="left:66px;top:648px" width="8" height="5"><path d="M1 4 L4 1 L7 4" stroke="#bbb" stroke-width="1.2" fill="none"/></svg>
<svg style="left:148px;top:648px" width="8" height="5"><path d="M1 4 L4 1 L7 4" stroke="#bbb" stroke-width="1.2" fill="none"/></svg>
<svg style="left:507px;top:648px" width="8" height="5"><path d="M1 4 L4 1 L7 4" stroke="#bbb" stroke-width="1.2" fill="none"/></svg>
<svg style="left:583px;top:648px" width="8" height="5"><path d="M1 4 L4 1 L7 4" stroke="#bbb" stroke-width="1.2" fill="none"/></svg>
<svg style="left:650px;top:648px" width="8" height="5"><path d="M1 4 L4 1 L7 4" stroke="#bbb" stroke-width="1.2" fill="none"/></svg>
<svg style="left:720px;top:648px" width="8" height="5"><path d="M1 4 L4 1 L7 4" stroke="#bbb" stroke-width="1.2" fill="none"/></svg>
<svg style="left:35px;top:639px" width="22" height="22"><rect x="8" y="1.5" width="6" height="11" rx="3" fill="none" stroke="#e8e8e8" stroke-width="1.4"/><path d="M5 9 C5 15 17 15 17 9 M11 15 V19.5 M7.5 19.5 H14.5" stroke="#e8e8e8" stroke-width="1.4" fill="none"/><path d="M3 19 L19 3" stroke="#e0245e" stroke-width="2"/></svg>
<svg style="left:110px;top:643px" width="24" height="15"><rect x="1" y="1" width="15" height="12.5" rx="3" fill="none" stroke="#e8e8e8" stroke-width="1.4"/><path d="M16 5.5 L22.5 2 V12.5 L16 9" fill="none" stroke="#e8e8e8" stroke-width="1.4" stroke-linejoin="round"/></svg>
<svg style="left:458px;top:642px" width="18" height="17"><circle cx="5" cy="4" r="2.8" fill="none" stroke="#e8e8e8" stroke-width="1.3"/><circle cx="12" cy="7" r="2.8" fill="none" stroke="#e8e8e8" stroke-width="1.3"/><path d="M1 15 C0.5 9.5 8 8.5 8.5 11" fill="none" stroke="#e8e8e8" stroke-width="1.3"/><path d="M6 16 C6 11 17.5 11 17.5 16Z" fill="none" stroke="#e8e8e8" stroke-width="1.3"/></svg>
<div class="t" style="left:481.00px;top:644.38px;font-size:9px;line-height:9px;color:#d0d0d0;font-weight:normal;font-family:'Liberation Sans',sans-serif;">38</div>
<svg style="left:548px;top:640px" width="21" height="20"><path d="M6 3 C7 1.5 9 1 11 1 H16 C18.5 1 19.5 2.5 19.5 5 V9 C19.5 11 18.5 12 17 12.2" fill="none" stroke="#e8e8e8" stroke-width="1.3"/><path d="M4 4 H13 C15 4 16 5 16 7 V12 C16 14 15 15 13 15 H8 L5 18.5 V15 H4 C2 15 1 14 1 12 V7 C1 5 2 4 4 4Z" fill="none" stroke="#e8e8e8" stroke-width="1.3"/><circle cx="5.5" cy="9.5" r="0.9" fill="#e8e8e8"/><circle cx="8.5" cy="9.5" r="0.9" fill="#e8e8e8"/><circle cx="11.5" cy="9.5" r="0.9" fill="#e8e8e8"/></svg>
<svg style="left:619px;top:641px" width="22" height="19"><path d="M11 17.5 L3 10 C0 7 1 2 5.5 1.5 C8 1.3 10 3 11 4.5 C12 3 14 1.3 16.5 1.5 C21 2 22 7 19 10Z" fill="none" stroke="#e8e8e8" stroke-width="1.4" stroke-linejoin="round"/></svg>
<svg style="left:691px;top:639px" width="17" height="21"><path d="M4 10 V4 C4 2.5 6.5 2.5 6.5 4 V9 M6.5 9 V2.5 C6.5 1 9 1 9 2.5 V9 M9 9 V3 C9 1.5 11.5 1.5 11.5 3 V9.5 M11.5 9.5 V5.5 C11.5 4 14 4 14 5.5 V12 C14 17 11.5 20 8 20 C5 20 3.5 18 2 15 L0.8 12 C0.3 10.5 2.5 9.5 3.3 11 L4 12.5" fill="none" stroke="#e8e8e8" stroke-width="1.3" stroke-linejoin="round"/></svg>
<div class="a" style="left:767px;top:642px;width:21px;height:16px;background:#19c77a;border-radius:3px"></div>
<svg style="left:771px;top:644px" width="13" height="12"><path d="M6.5 1.5 L2 6 H5 V10.5 H8 V6 H11Z" fill="#000"/></svg>
<svg style="left:842px;top:640px" width="20" height="20"><circle cx="14.5" cy="5" r="3.3" fill="none" stroke="#e8e8e8" stroke-width="1.4"/><circle cx="5" cy="14.5" r="3.3" fill="none" stroke="#e8e8e8" stroke-width="1.4"/><path d="M1 8 V4.5 C1 2.5 2.5 1 4.5 1 H8 M19 11.5 V15 C19 17 17.5 19 15.5 19 H12" fill="none" stroke="#e8e8e8" stroke-width="1.4"/></svg>
<svg style="left:909px;top:639px" width="22" height="22"><circle cx="11" cy="11" r="9.8" fill="none" stroke="#e8e8e8" stroke-width="1.4"/><circle cx="6.5" cy="11" r="1.3" fill="#e8e8e8"/><circle cx="11" cy="11" r="1.3" fill="#e8e8e8"/><circle cx="15.5" cy="11" r="1.3" fill="#e8e8e8"/></svg>
<svg style="left:1229px;top:639px" width="23" height="22"><path d="M6.5 1.2 H20.8 V20.8 H6.5" fill="#3a0812" stroke="#e0245e" stroke-width="1.3"/><path d="M13 3 V19" stroke="#c01c48" stroke-width="1"/><circle cx="7.5" cy="5" r="2.6" fill="#000" stroke="#fff" stroke-width="1.2"/><path d="M5 9 C6 8 9 8 10 9 L12.5 12.5 L11 13.5 L9 11.5 L9.5 15 L11.5 20 L9.5 20.5 L7.5 16.5 L5.5 20.5 L3.5 20 L5.5 14.5 L5.5 12 L3.5 13.5 L2 12 Z" fill="#0a0a0a" stroke="#fff" stroke-width="1.2" stroke-linejoin="round"/></svg>
<div class="a" style="left:0;top:680px;width:1280px;height:40px;background:linear-gradient(90deg,#e3ebf6 0%,#e4ecf7 15%,#dde8f8 25%,#d6e2f8 29%,#e4eaf7 40%,#e0e6f4 55%,#dde1ef 72%,#e2e8f4 82%,#e5ebf6 100%);border-top:1px solid #e8ecf4"></div>
<svg style="left:15px;top:690px" width="24" height="16"><path d="M5 14 C1 14 0.5 9 4 8.5 C4.5 4.5 9 3 12 5 C14 1.5 20 2.5 20 7.5 C23.5 8 23.5 14 19.5 14Z" fill="#c2d3ec" stroke="#9bb4d8" stroke-width="1"/></svg>
<div class="t" style="left:43.00px;top:688.11px;font-size:10.5px;line-height:10.5px;color:#222;font-weight:normal;font-family:'Liberation Sans',sans-serif;transform:scaleX(0.8511);transform-origin:0 0;">7°C</div>
<div class="t" style="left:43.00px;top:701.11px;font-size:10.5px;line-height:10.5px;color:#555;font-weight:normal;font-family:'Liberation Sans',sans-serif;transform:scaleX(0.9484);transform-origin:0 0;">Cloudy</div>
<svg style="left:372px;top:691px" width="20" height="19"><rect x="0" y="0" width="9.3" height="9" fill="#1c8be0"/><rect x="10.3" y="0" width="9.3" height="9" fill="#2596e8"/><rect x="0" y="10" width="9.3" height="9" fill="#1a7fd6"/><rect x="10.3" y="10" width="9.3" height="9" fill="#1f8ce0"/></svg>
<div class="a" style="left:404px;top:688px;width:180px;height:25px;background:#f5f7fc;border-radius:13px;border:1px solid #dde3ee"></div>
<svg style="left:411px;top:693px" width="14" height="15"><circle cx="6" cy="6" r="4.5" fill="none" stroke="#222" stroke-width="1.6"/><path d="M9.5 9.5 L13 13" stroke="#222" stroke-width="1.8"/></svg>
<div class="t" style="left:433.00px;top:695.27px;font-size:11.5px;line-height:11.5px;color:#555;font-weight:normal;font-family:'Liberation Sans',sans-serif;transform:scaleX(1.0383);transform-origin:0 0;">Пошук</div>
<svg style="left:540px;top:689px" width="42" height="22"><path d="M2 18 C6 14 10 11 16 12 C22 12 28 10 40 17 L40 22 H2Z" fill="#4b8a3a"/><path d="M8 13 L12 5 L18 3 L24 6 L30 4 L34 9 L36 16 L12 16Z" fill="#d9b575"/><path d="M14 8 L18 6 L22 9 L20 15 L14 15Z" fill="#b88a50"/></svg>
<svg style="left:596px;top:692px" width="17" height="17"><rect x="5" y="1" width="11" height="11" fill="#e8e8e8" stroke="#ccc"/><rect x="1" y="5" width="11" height="11" fill="#1e1e1e"/><rect x="5" y="5" width="7" height="7" fill="#bdbdbd"/></svg>
<svg style="left:632px;top:690px" width="20" height="20"><path d="M6 2 C9 0 13 1 14 4 L10 16 C9 19 4 19 3 16 L2 10 C1 6 3 3 6 2Z" fill="#3fb0e8"/><path d="M14 4 C17 5 19 9 18 12 L16 17 C15 19 12 19 10 16 L14 4Z" fill="#e055b5"/><path d="M6 10 L12 8 L14 13 L8 15Z" fill="#f5a640"/></svg>
<svg style="left:669px;top:691px" width="21" height="17"><path d="M1 2 H8 L10 4 H20 V16 H1Z" fill="#f2c12e"/><path d="M1 6 H20 V16 H1Z" fill="#ffd450"/><rect x="4" y="11" width="13" height="4" fill="#2a7cd8"/></svg>
<svg style="left:706px;top:690px" width="20" height="19"><rect x="1" y="1" width="18" height="17" rx="1.5" fill="#2f4aa8"/><rect x="4" y="1" width="11" height="6" fill="#f1f1f6"/><rect x="11" y="2" width="2" height="4" fill="#2f4aa8"/><rect x="4" y="10" width="12" height="7" fill="#f4f4f8"/><path d="M12 15 H15" stroke="#777"/></svg>
<svg style="left:744px;top:690px" width="17" height="20"><rect x="0.5" y="0.5" width="16" height="19" rx="1.5" fill="#8a9aa8"/><rect x="2.5" y="2.5" width="12" height="4" fill="#cfe3f2"/><g fill="#eef2f5"><rect x="2.5" y="8.5" width="3.3" height="2.8"/><rect x="6.9" y="8.5" width="3.3" height="2.8"/><rect x="2.5" y="12.5" width="3.3" height="2.8"/><rect x="6.9" y="12.5" width="3.3" height="2.8"/><rect x="2.5" y="16" width="3.3" height="2.5"/><rect x="6.9" y="16" width="3.3" height="2.5"/></g><rect x="11.3" y="8.5" width="3.3" height="10" fill="#2a4b6a"/></svg>
<svg style="left:779px;top:690px" width="21" height="21"><path d="M10.5 1.5 A9 9 0 1 1 3 15.5 L1.5 20 L6 18.5 A9 9 0 0 0 10.5 19.5" fill="none" stroke="#25a244" stroke-width="2"/><path d="M3 15.5 L1.5 20 L6 18.5 A9 9 0 1 0 3 15.5Z" fill="none" stroke="#25a244" stroke-width="2"/><path d="M7 6.5 C6.5 9 9 13.5 13.5 14.5 L15 13 L13 11.5 L12 12.3 C10.5 11.5 9.5 10.5 8.8 9 L9.6 8 L8.3 6Z" fill="#25a244"/></svg>
<div class="a" style="left:810px;top:684px;width:31px;height:32px;background:#f3f6fb;border-radius:4px"></div>
<div class="a" style="left:815px;top:689px;width:21px;height:21px;border-radius:50%;background:#0b5cff"></div>
<div class="t" style="left:818.97px;top:697.27px;font-size:5px;line-height:5px;color:#fff;font-weight:bold;font-family:'Liberation Sans',sans-serif;">zoom</div>
<div class="a" style="left:820px;top:714px;width:12px;height:3px;border-radius:2px;background:#0a62c6"></div>
<svg style="left:852px;top:689px" width="24" height="22"><circle cx="10" cy="12" r="9.5" fill="#e74335"/><path d="M10 12 L18.2 7.2 A9.5 9.5 0 0 1 9 21.5Z" fill="#f6c034"/><path d="M10 12 L9 21.5 A9.5 9.5 0 0 1 1.8 7.2Z" fill="#34a853"/><circle cx="10" cy="12" r="4.5" fill="#fff"/><circle cx="10" cy="12" r="3.5" fill="#3b7de6"/><circle cx="18.5" cy="5" r="5" fill="#5a8ee8" stroke="#fff" stroke-width="1"/><circle cx="18.5" cy="4" r="1.6" fill="none" stroke="#fff"/><path d="M16 8 C16 6 21 6 21 8" stroke="#fff" fill="none"/></svg>
<div class="a" style="left:860px;top:714px;width:5px;height:2px;border-radius:1px;background:#777"></div>
<svg style="left:889px;top:689px" width="26" height="22"><circle cx="10" cy="12" r="9.5" fill="#2aa3de"/><path d="M4.5 11.5 L15 7.5 L13 16.5 L10 14 L8.5 15.5 L8.5 13 Z" fill="#fff"/></svg>
<div class="a" style="left:900px;top:688px;width:15px;height:10px;border-radius:5px;background:#e84b4b"></div>
<div class="t" style="left:902.00px;top:690.07px;font-size:7px;line-height:7px;color:#fff;font-weight:normal;font-family:'Liberation Sans',sans-serif;transform:scaleX(0.9412);transform-origin:0 0;">195</div>
<div class="a" style="left:897px;top:714px;width:5px;height:2px;border-radius:1px;background:#777"></div>
<svg style="left:1034px;top:696px" width="11" height="7"><path d="M1 6 L5.5 1.5 L10 6" fill="none" stroke="#333" stroke-width="1.5"/></svg>
<svg style="left:1058px;top:691px" width="15" height="16"><path d="M12 4 A6 6 0 0 0 2.5 6 M3 11 A6 6 0 0 0 12.5 10" fill="none" stroke="#666" stroke-width="1.4"/><path d="M12 1 V5 H8" fill="none" stroke="#666" stroke-width="1.3"/><circle cx="11.5" cy="12.5" r="3" fill="#f39a1e"/></svg>
<svg style="left:1082px;top:690px" width="20" height="17"><rect x="3" y="1" width="4" height="7" rx="2" fill="#4a6fa5"/><path d="M1.5 6 C1.5 10 8.5 10 8.5 6 M5 9.5 V11" stroke="#4a6fa5" stroke-width="1.1" fill="none"/><path d="M10 10 L19 6 L16 15 L14.5 11.5Z" fill="none" stroke="#4a6fa5" stroke-width="1.2"/></svg>
<div class="t" style="left:1115.00px;top:695.11px;font-size:10.5px;line-height:10.5px;color:#333;font-weight:normal;font-family:'Liberation Sans',sans-serif;transform:scaleX(0.9092);transform-origin:0 0;">УКР</div>
<svg style="left:1149px;top:693px" width="15" height="12"><path d="M1 4.5 A9 9 0 0 1 14 4.5 M3.2 7 A6 6 0 0 1 11.8 7 M5.4 9.4 A3 3 0 0 1 9.6 9.4" fill="none" stroke="#222" stroke-width="1.3"/><circle cx="7.5" cy="11" r="1" fill="#222"/></svg>
<svg style="left:1168px;top:692px" width="14" height="13"><path d="M1 4.5 H4 L7.5 1.5 V11.5 L4 8.5 H1Z" fill="none" stroke="#222" stroke-width="1.1"/><path d="M9.5 4 C10.8 5.5 10.8 7.5 9.5 9 M11.5 2.5 C13.5 4.5 13.5 8.5 11.5 10.5" fill="none" stroke="#222" stroke-width="1.1"/></svg>
<svg style="left:1188px;top:692px" width="17" height="12"><rect x="1" y="3" width="13" height="7.5" rx="1" fill="#222"/><rect x="14" y="5" width="2" height="3.5" fill="#222"/><path d="M3 0.5 L2 3" stroke="#222"/></svg>
<div class="t" style="left:1241.00px;top:687.69px;font-size:11px;line-height:11px;color:#222;font-weight:normal;font-family:'Liberation Sans',sans-serif;transform:scaleX(0.8608);transform-origin:0 0;">11:18</div>
<div class="t" style="left:1217.00px;top:700.69px;font-size:11px;line-height:11px;color:#222;font-weight:normal;font-family:'Liberation Sans',sans-serif;transform:scaleX(0.8536);transform-origin:0 0;">10.12.2025</div>
</body></html>
